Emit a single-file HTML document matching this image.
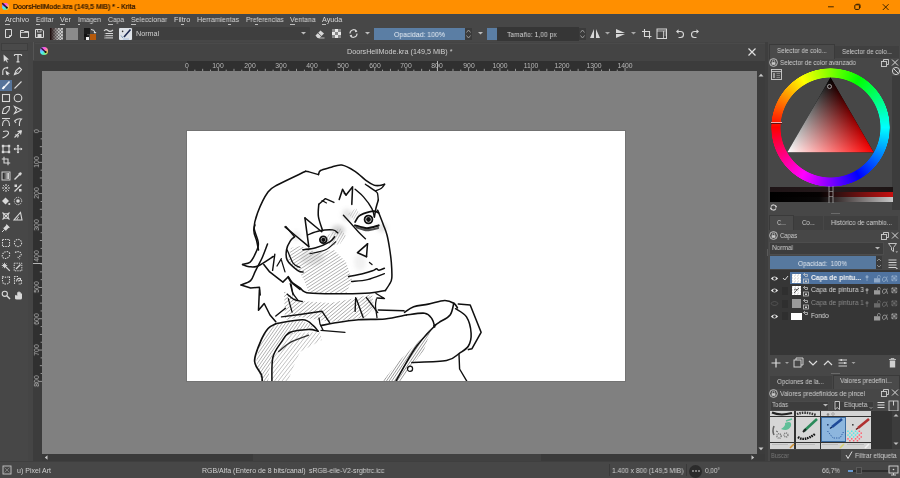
<!DOCTYPE html>
<html><head><meta charset="utf-8"><style>
html,body{margin:0;padding:0;width:900px;height:478px;overflow:hidden;background:#474747}
body>div,body>span,body>svg{position:absolute}
.t{font-family:'Liberation Sans',sans-serif;white-space:nowrap;line-height:1.2;will-change:transform}
</style></head><body>
<div style="left:0px;top:0px;width:900px;height:478px;background:#474747;"></div><div style="left:0px;top:0px;width:900px;height:14px;background:#ff8f00;"></div><div style="left:0px;top:14px;width:900px;height:1px;background:#3f4850;"></div><div style="left:1.9px;top:2.6px;width:7.4px;height:7.4px;border-radius:50%;background:conic-gradient(from 0deg,#ff50f0,#ff8aa0 60deg,#e8e048 120deg,#50f0b0 180deg,#50e8ff 240deg,#8c8cff 300deg,#ff50f0)"></div><svg style="left:1px;top:2px;" width="9" height="9" viewBox="0 0 9 9"><path d="M1.6 1.6 L5.8 5.6" stroke="#3a1040" stroke-width="1.5" stroke-linecap="round"/><circle cx="5.9" cy="5.7" r="0.9" fill="#101010"/></svg><span class="t" style="left:13.3px;top:2.77px;color:#1a0c00;font-size:7.0px;font-family:'Liberation Sans';transform:scaleX(0.9925);transform-origin:0 0;-webkit-text-stroke:0.2px #1a0c00;">DoorsHellMode.kra (149,5 MiB) * - Krita</span><svg style="left:825px;top:0px;" width="70" height="14" viewBox="0 0 70 14"><path d="M3 6.8H8.8" stroke="#2a1800" stroke-width="0.9"/><rect x="29.8" y="4.8" width="4.6" height="4.6" rx="0.8" fill="none" stroke="#2a1800" stroke-width="1"/><path d="M31.3 4.2H34.2Q35.2 4.2 35.2 5.2V8" fill="none" stroke="#2a1800" stroke-width="0.8"/><path d="M57.8 4.2L63.6 10M63.6 4.2L57.8 10" stroke="#2a1800" stroke-width="0.9"/></svg><span class="t" style="left:5px;top:15.89px;color:#d6d6d6;font-size:7.2px;font-family:'Liberation Sans';transform:scaleX(0.9804);transform-origin:0 0;">Archivo</span><span class="t" style="left:36px;top:15.89px;color:#d6d6d6;font-size:7.2px;font-family:'Liberation Sans';transform:scaleX(0.9318);transform-origin:0 0;">Editar</span><span class="t" style="left:60px;top:15.89px;color:#d6d6d6;font-size:7.2px;font-family:'Liberation Sans';transform:scaleX(0.9725);transform-origin:0 0;">Ver</span><span class="t" style="left:78px;top:15.89px;color:#d6d6d6;font-size:7.2px;font-family:'Liberation Sans';transform:scaleX(0.9590);transform-origin:0 0;">Imagen</span><span class="t" style="left:108.1px;top:15.89px;color:#d6d6d6;font-size:7.2px;font-family:'Liberation Sans';transform:scaleX(0.9309);transform-origin:0 0;">Capa</span><span class="t" style="left:131px;top:15.89px;color:#d6d6d6;font-size:7.2px;font-family:'Liberation Sans';transform:scaleX(0.9584);transform-origin:0 0;">Seleccionar</span><span class="t" style="left:173.8px;top:15.89px;color:#d6d6d6;font-size:7.2px;font-family:'Liberation Sans';transform:scaleX(1.0135);transform-origin:0 0;">Filtro</span><span class="t" style="left:196.7px;top:15.89px;color:#d6d6d6;font-size:7.2px;font-family:'Liberation Sans';transform:scaleX(0.9782);transform-origin:0 0;">Herramientas</span><span class="t" style="left:245.6px;top:15.89px;color:#d6d6d6;font-size:7.2px;font-family:'Liberation Sans';transform:scaleX(0.9341);transform-origin:0 0;">Preferencias</span><span class="t" style="left:290px;top:15.89px;color:#d6d6d6;font-size:7.2px;font-family:'Liberation Sans';transform:scaleX(0.9700);transform-origin:0 0;">Ventana</span><span class="t" style="left:321.7px;top:15.89px;color:#d6d6d6;font-size:7.2px;font-family:'Liberation Sans';transform:scaleX(0.9926);transform-origin:0 0;">Ayuda</span><svg style="left:3px;top:28px;" width="45" height="12" viewBox="0 0 45 12">
<path d="M2.5 1.5H8.5V7.5L6.5 9.5H2.5Z" fill="none" stroke="#d8d8d8" stroke-width="1"/><path d="M6.5 9.5V7.5H8.5" fill="none" stroke="#d8d8d8" stroke-width="0.9"/>
<path d="M17.5 2.5H20.5L21.5 3.5H25.5V9.5H17.5Z" fill="none" stroke="#d8d8d8" stroke-width="1"/><path d="M17.5 4.5H25.5" stroke="#d8d8d8" stroke-width="0.8"/>
<path d="M32.5 1.5H39L40.5 3V9.5H32.5Z" fill="none" stroke="#d8d8d8" stroke-width="1"/><rect x="34.5" y="6" width="4" height="3" fill="#d8d8d8"/><rect x="34.5" y="1.5" width="3.5" height="2.5" fill="none" stroke="#d8d8d8" stroke-width="0.7"/></svg><div style="left:50px;top:27.5px;width:13px;height:12.5px;background:linear-gradient(90deg,#1a0808,#3a2a2a 50%,#8a8a8a);"></div><div style="left:50px;top:27.5px;width:13px;height:12.5px;background:repeating-conic-gradient(#d8d8d8 0 25%,#707070 0 50%) 0 0/3.2px 3.2px;-webkit-mask:linear-gradient(90deg,transparent,#000 75%);mask:linear-gradient(90deg,transparent,#000 75%)"></div><div style="left:66px;top:28px;width:12px;height:12px;background:#8b8b8b;"></div><div style="left:84px;top:28px;width:6px;height:6px;background:#1b1b1b;"></div><div style="left:90px;top:34px;width:6px;height:6px;background:#b65a0c;"></div><div style="left:84px;top:35px;width:5px;height:5px;background:#1e1e1e;"></div><svg style="left:84px;top:34px;" width="6" height="6" viewBox="0 0 6 6"><path d="M2 6V3H5V6Z" fill="#f0f0f0"/><rect x="0" y="0" width="3" height="3" fill="#111"/></svg><svg style="left:90px;top:28px;" width="7" height="6" viewBox="0 0 7 6"><path d="M1 1.5 Q5 1.5 5 5" stroke="#e0e0e0" stroke-width="1" fill="none"/><path d="M3.5 4 L5 5.8 L6.5 4" fill="#e0e0e0"/></svg><svg style="left:103px;top:28px;" width="11" height="11" viewBox="0 0 11 11"><path d="M1 3 Q3 0.5 5 2.5 T10 2" stroke="#d8d8d8" stroke-width="1.1" fill="none"/><path d="M1 5.5H10M1 7.7H10M1 9.9H10" stroke="#d8d8d8" stroke-width="1"/><path d="M1 5.5H2.5M1 7.7H2.5M1 9.9H2.5" stroke="#555" stroke-width="1"/></svg><div style="left:119px;top:27.5px;width:12.5px;height:12.5px;background:#dfe3e8;border-radius:1px"></div><svg style="left:119px;top:27.5px;" width="13" height="13" viewBox="0 0 13 13"><path d="M4 10 L2 7.5" stroke="#7f9fc0" stroke-width="1"/><path d="M5 9 L11.5 1.5" stroke="#1e2a50" stroke-width="1.6"/><circle cx="3.6" cy="3.4" r="0.8" fill="#333"/><path d="M4 11 L10 11" stroke="#a8c0dc" stroke-width="1"/></svg><div style="left:133px;top:27px;width:177px;height:13px;background:#3f3f3f;border-radius:1px"></div><span class="t" style="left:136px;top:29.79px;color:#cfcfcf;font-size:7.2px;font-family:'Liberation Sans';">Normal</span><svg style="left:300px;top:31px;" width="7" height="5" viewBox="0 0 7 5"><path d="M1 1L3.5 3.5L6 1Z" fill="#bdbdbd"/></svg><svg style="left:314px;top:28px;" width="12" height="11" viewBox="0 0 12 11"><path d="M1.5 7.5L6.5 2.5L10 5.5L5.5 10H3.5Z" fill="#d8d8d8"/><path d="M4.5 10H10.5" stroke="#d8d8d8" stroke-width="0.8"/><path d="M4 5L7.5 8.3" stroke="#474747" stroke-width="0.8"/></svg><div style="left:332px;top:29px;width:9px;height:9px;background:repeating-conic-gradient(#e8e8e8 0 25%,#8a8a8a 0 50%) 0 0/6px 6px"></div><svg style="left:348px;top:28px;" width="11" height="11" viewBox="0 0 11 11"><path d="M2 5.5A3.6 3.6 0 0 1 8.5 3.2" stroke="#d8d8d8" stroke-width="1.1" fill="none"/><path d="M9 5.5A3.6 3.6 0 0 1 2.5 7.8" stroke="#d8d8d8" stroke-width="1.1" fill="none"/><path d="M7.2 1.5L9.5 3.8L7 4.2Z" fill="#d8d8d8"/><path d="M3.8 9.5L1.5 7.2L4 6.8Z" fill="#d8d8d8"/></svg><svg style="left:364px;top:31px;" width="7" height="5" viewBox="0 0 7 5"><path d="M1 1L3.5 3.5L6 1Z" fill="#bdbdbd"/></svg><div style="left:374px;top:27.5px;width:91px;height:12.5px;background:#5b7ea4;"></div><span class="t" style="left:393.5px;top:30.69px;color:#e8eef5;font-size:7.2px;font-family:'Liberation Sans';transform:scaleX(0.9594);transform-origin:0 0;">Opacidad: 100%</span><div style="left:465px;top:27.5px;width:7px;height:12.5px;background:#3b3b3b;"></div><svg style="left:465px;top:28px;" width="7" height="12" viewBox="0 0 7 12"><path d="M1.5 4.5L3.5 2L5.5 4.5M1.5 7.5L3.5 10L5.5 7.5" stroke="#a0a0a0" stroke-width="0.9" fill="none"/></svg><svg style="left:477px;top:31px;" width="7" height="5" viewBox="0 0 7 5"><path d="M1 1L3.5 3.5L6 1Z" fill="#bdbdbd"/></svg><div style="left:486.5px;top:27.5px;width:10px;height:12.5px;background:#5b7ea4;"></div><div style="left:496.5px;top:27px;width:82px;height:14px;background:#363636;"></div><span class="t" style="left:507px;top:30.69px;color:#d2d2d2;font-size:7.2px;font-family:'Liberation Sans';transform:scaleX(0.9353);transform-origin:0 0;">Tamaño: 1,00 px</span><div style="left:578.5px;top:27.5px;width:7px;height:12.5px;background:#3b3b3b;"></div><svg style="left:578.5px;top:28px;" width="7" height="12" viewBox="0 0 7 12"><path d="M1.5 4.5L3.5 2L5.5 4.5M1.5 7.5L3.5 10L5.5 7.5" stroke="#a0a0a0" stroke-width="0.9" fill="none"/></svg><svg style="left:589px;top:28px;" width="12" height="11" viewBox="0 0 12 11"><path d="M5 1L1 10H5Z M7 1L11 10H7Z" fill="#d8d8d8"/></svg><svg style="left:604px;top:31px;" width="7" height="5" viewBox="0 0 7 5"><path d="M1 1L3.5 3.5L6 1Z" fill="#a8a8a8"/></svg><svg style="left:615px;top:28px;" width="11" height="11" viewBox="0 0 11 11"><path d="M1 1L10 5H1Z M1 6L10 6L1 10Z" fill="#d8d8d8"/></svg><svg style="left:630px;top:31px;" width="7" height="5" viewBox="0 0 7 5"><path d="M1 1L3.5 3.5L6 1Z" fill="#a8a8a8"/></svg><svg style="left:641px;top:28px;" width="11" height="11" viewBox="0 0 11 11"><path d="M3.5 1V8.5H10.5M1 3.5H8.5V10.5" stroke="#d8d8d8" stroke-width="1.1" fill="none"/></svg><svg style="left:656px;top:28px;" width="11" height="11" viewBox="0 0 11 11"><rect x="1" y="1" width="9.5" height="9.5" fill="none" stroke="#d8d8d8" stroke-width="1"/><path d="M1 3H10.5M7.5 3V10.5" stroke="#d8d8d8" stroke-width="0.8"/><path d="M8.5 5H10M8.5 7H10" stroke="#d8d8d8" stroke-width="0.6"/></svg><svg style="left:675px;top:28px;" width="10" height="11" viewBox="0 0 10 11"><path d="M3 3.5H5.5A2.8 2.8 0 0 1 5.5 9.5H3.5" stroke="#d8d8d8" stroke-width="1.1" fill="none"/><path d="M1 3.5L3.5 1.2V5.8Z" fill="#d8d8d8"/></svg><svg style="left:690px;top:28px;" width="10" height="11" viewBox="0 0 10 11"><path d="M7 3.5H4.5A2.8 2.8 0 0 0 4.5 9.5H6.5" stroke="#d8d8d8" stroke-width="1.1" fill="none"/><path d="M9 3.5L6.5 1.2V5.8Z" fill="#d8d8d8"/></svg><div style="left:5px;top:23.8px;width:4.5px;height:0.6px;background:#bdbdbd;"></div><div style="left:36px;top:23.8px;width:4px;height:0.6px;background:#bdbdbd;"></div><div style="left:60px;top:23.8px;width:4.5px;height:0.6px;background:#bdbdbd;"></div><div style="left:78px;top:23.8px;width:2px;height:0.6px;background:#bdbdbd;"></div><div style="left:108.1px;top:23.8px;width:4.5px;height:0.6px;background:#bdbdbd;"></div><div style="left:131px;top:23.8px;width:4.5px;height:0.6px;background:#bdbdbd;"></div><div style="left:181.3px;top:23.8px;width:2.5px;height:0.6px;background:#bdbdbd;"></div><div style="left:227.8px;top:23.8px;width:3px;height:0.6px;background:#bdbdbd;"></div><div style="left:255.3px;top:23.8px;width:2.8px;height:0.6px;background:#bdbdbd;"></div><div style="left:290px;top:23.8px;width:4.5px;height:0.6px;background:#bdbdbd;"></div><div style="left:321.7px;top:23.8px;width:4.5px;height:0.6px;background:#bdbdbd;"></div><div style="left:28px;top:42px;width:5px;height:419px;background:#454545;"></div><div style="left:1px;top:43px;width:27px;height:8px;background:#4a4a4a;border:1px solid #3e3e3e;box-sizing:border-box"></div><div style="left:33px;top:42px;width:1px;height:18px;background:#555555;"></div><div style="left:34px;top:42px;width:732px;height:19px;background:#444444;"></div><div style="left:35px;top:43px;width:730px;height:1px;background:#4a4a4a;"></div><div style="left:39.9px;top:47.3px;width:8.2px;height:8.2px;border-radius:50%;background:conic-gradient(from 0deg,#ff50f0,#ff8aa0 60deg,#d8e048 120deg,#50f0b0 180deg,#50e8ff 240deg,#8c8cff 300deg,#ff50f0)"></div><svg style="left:39px;top:46px;" width="10" height="10" viewBox="0 0 10 10"><path d="M2.8 2.5 L6.5 6" stroke="#3a1040" stroke-width="1.5" stroke-linecap="round"/><circle cx="6.6" cy="6.1" r="1" fill="#101010"/></svg><span class="t" style="left:346.5px;top:48.20px;color:#cfcfcf;font-size:7.2px;font-family:'Liberation Sans';">DoorsHellMode.kra (149,5 MiB) *</span><svg style="left:747px;top:47px;" width="10" height="10" viewBox="0 0 10 10"><path d="M1.5 1.5L8.5 8.5M8.5 1.5L1.5 8.5" stroke="#e0e0e0" stroke-width="1.2"/></svg><div style="left:42px;top:71px;width:715px;height:383px;background:#808080;"></div><div style="left:186px;top:130px;width:440px;height:252px;background:#737373;"></div><div style="left:187px;top:131px;width:438px;height:250px;background:#ffffff;"></div><div style="left:757px;top:71px;width:8px;height:383px;background:#3c3c3c;"></div><svg style="left:757px;top:71.5px;" width="8" height="6" viewBox="0 0 8 6"><path d="M1.5 4.5L4 1.8L6.5 4.5Z" fill="#c8c8c8"/></svg><svg style="left:757px;top:446px;" width="8" height="6" viewBox="0 0 8 6"><path d="M1.5 1.5L4 4.2L6.5 1.5Z" fill="#c8c8c8"/></svg><div style="left:42px;top:454px;width:723px;height:7px;background:#3a3a3a;"></div><div style="left:253px;top:454px;width:288px;height:7px;background:#414141;"></div><svg style="left:43px;top:454px;" width="6" height="7" viewBox="0 0 6 7"><path d="M4.5 1.2L1.8 3.5L4.5 5.8Z" fill="#c8c8c8"/></svg><svg style="left:750px;top:454px;" width="6" height="7" viewBox="0 0 6 7"><path d="M1.5 1.2L4.2 3.5L1.5 5.8Z" fill="#c8c8c8"/></svg><div style="left:0px;top:79.7px;width:12px;height:11px;background:#56749a;"></div><svg style="left:0;top:0" width="0" height="0"><defs><linearGradient id="gg" x1="0" x2="1"><stop offset="0" stop-color="#222"/><stop offset="1" stop-color="#ddd"/></linearGradient></defs></svg><svg style="left:1.0px;top:53.0px;" width="10" height="10" viewBox="0 0 10 10"><path d="M2.5 1.5L8 6.5L5.5 6.8L7 9.2L6 9.6L4.6 7.2L2.8 8.8Z" fill="#d8d8d8"/></svg><svg style="left:13.3px;top:53.0px;" width="10" height="10" viewBox="0 0 10 10"><path d="M1.5 1.5H8.5M5 1.5V8.8M1.5 1.5V3M8.5 1.5V3M3.5 8.8H6.5" stroke="#d8d8d8" stroke-width="1.2" fill="none"/></svg><svg style="left:1.0px;top:65.5px;" width="10" height="10" viewBox="0 0 10 10"><path d="M1.8 9V5.5Q1.8 2 6 1.8" stroke="#d8d8d8" stroke-width="1.1" fill="none"/><circle cx="6.3" cy="1.8" r="1" fill="#d8d8d8"/><path d="M4.5 4.5L9 7.5L7 8L8 9.6L5.2 8.5Z" fill="#d8d8d8"/></svg><svg style="left:13.3px;top:65.5px;" width="10" height="10" viewBox="0 0 10 10"><path d="M1.5 8.5L3 4.5L6.5 1.5L8.5 3.5L5.5 7Z" stroke="#d8d8d8" stroke-width="1.1" fill="none"/><path d="M1.5 8.5L4.5 5.5" stroke="#d8d8d8" stroke-width="0.8"/></svg><svg style="left:1.0px;top:80.0px;" width="10" height="10" viewBox="0 0 10 10"><path d="M2 8.5L8.5 1.5" stroke="#e8eef5" stroke-width="1.6"/><path d="M1.5 9L3.5 6.5" stroke="#ffffff" stroke-width="2"/></svg><svg style="left:13.3px;top:80.0px;" width="10" height="10" viewBox="0 0 10 10"><path d="M1.5 8.5L8.5 1.5" stroke="#d8d8d8" stroke-width="1.1"/></svg><svg style="left:1.0px;top:92.7px;" width="10" height="10" viewBox="0 0 10 10"><rect x="1.5" y="1.5" width="7" height="7" stroke="#d8d8d8" stroke-width="1.1" fill="none"/></svg><svg style="left:13.3px;top:92.7px;" width="10" height="10" viewBox="0 0 10 10"><circle cx="5" cy="5" r="3.8" stroke="#d8d8d8" stroke-width="1.1" fill="none"/></svg><svg style="left:1.0px;top:105.0px;" width="10" height="10" viewBox="0 0 10 10"><path d="M1.5 7.5L2.5 3.5L6 1.5H8.5L8 5L5 8.5H1.5Z" stroke="#d8d8d8" stroke-width="1.1" fill="none"/></svg><svg style="left:13.3px;top:105.0px;" width="10" height="10" viewBox="0 0 10 10"><path d="M1.5 1.5L8.5 5L1.5 8.5L3.5 5Z" stroke="#d8d8d8" stroke-width="1.1" fill="none"/></svg><svg style="left:1.0px;top:117.0px;" width="10" height="10" viewBox="0 0 10 10"><path d="M1.5 9Q1.5 3 5 3Q8.5 3 8.5 9M1 1.5H9" stroke="#d8d8d8" stroke-width="1.1" fill="none"/></svg><svg style="left:13.3px;top:117.0px;" width="10" height="10" viewBox="0 0 10 10"><path d="M1.5 4Q5 1 8.5 2Q6 4 6.5 9" stroke="#d8d8d8" stroke-width="1.1" fill="none"/><path d="M1.5 4L3 6" stroke="#d8d8d8" stroke-width="1.1" fill="none"/></svg><svg style="left:1.0px;top:129.0px;" width="10" height="10" viewBox="0 0 10 10"><path d="M2 2.5Q8 1 7.5 4.5Q6.5 7 1.5 9" stroke="#d8d8d8" stroke-width="1.1" fill="none"/></svg><svg style="left:13.3px;top:129.0px;" width="10" height="10" viewBox="0 0 10 10"><path d="M1.5 8.5L8.5 1.5M8.5 1.5L4.5 2.5M8.5 1.5L7.5 5.5M2.5 5.5L4 7M4.5 8.5L5.5 6" stroke="#d8d8d8" stroke-width="1.1" fill="none"/></svg><svg style="left:1.0px;top:144.0px;" width="10" height="10" viewBox="0 0 10 10"><rect x="2" y="2" width="6" height="6" stroke="#d8d8d8" stroke-width="1.1" fill="none"/><rect x="0.8" y="0.8" width="2.4" height="2.4" fill="#d8d8d8"/><rect x="6.8" y="0.8" width="2.4" height="2.4" fill="#d8d8d8"/><rect x="0.8" y="6.8" width="2.4" height="2.4" fill="#d8d8d8"/><rect x="6.8" y="6.8" width="2.4" height="2.4" fill="#d8d8d8"/></svg><svg style="left:13.3px;top:144.0px;" width="10" height="10" viewBox="0 0 10 10"><path d="M5 1V9M1 5H9" stroke="#d8d8d8" stroke-width="1.2"/><path d="M5 0.5L3.5 2.3H6.5ZM5 9.5L3.5 7.7H6.5ZM0.5 5L2.3 3.5V6.5ZM9.5 5L7.7 3.5V6.5Z" fill="#d8d8d8"/></svg><svg style="left:1.0px;top:156.0px;" width="10" height="10" viewBox="0 0 10 10"><path d="M3 0.8V7H9.2M0.8 3H7V9.2" stroke="#d8d8d8" stroke-width="1.1" fill="none"/></svg><svg style="left:1.0px;top:171.0px;" width="10" height="10" viewBox="0 0 10 10"><rect x="1" y="1" width="8" height="8" fill="none" stroke="#d8d8d8" stroke-width="0.9"/><rect x="2" y="2" width="6" height="6" fill="url(#gg)"/></svg><svg style="left:13.3px;top:171.0px;" width="10" height="10" viewBox="0 0 10 10"><path d="M1.5 8.5L6 4" stroke="#d8d8d8" stroke-width="1.4"/><path d="M5 3L7 1.2Q9 1 8.8 3L7 5Z" fill="#d8d8d8"/></svg><svg style="left:1.0px;top:183.0px;" width="10" height="10" viewBox="0 0 10 10"><path d="M5 1V3M5 7V9M1 5H3M7 5H9M2.2 2.2L3.5 3.5M6.5 6.5L7.8 7.8M2.2 7.8L3.5 6.5M6.5 3.5L7.8 2.2" stroke="#d8d8d8" stroke-width="1"/><circle cx="5" cy="5" r="1" fill="#d8d8d8"/></svg><svg style="left:13.3px;top:183.0px;" width="10" height="10" viewBox="0 0 10 10"><path d="M1.5 8.5L8.5 1.5" stroke="#d8d8d8" stroke-width="1.2"/><rect x="1.5" y="1.5" width="2.5" height="2.5" fill="#d8d8d8"/><rect x="6" y="6" width="2.5" height="2.5" fill="#d8d8d8"/></svg><svg style="left:1.0px;top:195.6px;" width="10" height="10" viewBox="0 0 10 10"><path d="M1 5L4.5 1.5L8 5L4.5 8.5Z" fill="#d8d8d8"/><circle cx="8.3" cy="8" r="1.1" fill="#d8d8d8"/></svg><svg style="left:13.3px;top:195.6px;" width="10" height="10" viewBox="0 0 10 10"><circle cx="5" cy="5" r="3.7" fill="none" stroke="#d8d8d8" stroke-width="1" stroke-dasharray="1.2 0.9"/><circle cx="5" cy="5" r="1.8" fill="#d8d8d8"/></svg><svg style="left:1.0px;top:211.0px;" width="10" height="10" viewBox="0 0 10 10"><path d="M1.5 1.5L8.5 8.5M8.5 1.5L1.5 8.5" stroke="#d8d8d8" stroke-width="1.1"/><rect x="2.5" y="2.5" width="5" height="5" fill="none" stroke="#d8d8d8" stroke-width="0.7"/></svg><svg style="left:13.3px;top:211.0px;" width="10" height="10" viewBox="0 0 10 10"><path d="M1 9H9L7.5 1.5Z" stroke="#d8d8d8" stroke-width="1.1" fill="none"/><path d="M4 9Q4 6.5 6 6" stroke="#d8d8d8" stroke-width="0.8" fill="none"/></svg><svg style="left:1.0px;top:223.0px;" width="10" height="10" viewBox="0 0 10 10"><path d="M5.5 1L9 4.5L7.5 5L5 7.5L5.5 8.5L1.5 4.5L2.5 5L5 2.5Z" fill="#d8d8d8"/><path d="M3.5 6.5L1 9" stroke="#d8d8d8" stroke-width="1"/></svg><svg style="left:1.0px;top:238.0px;" width="10" height="10" viewBox="0 0 10 10"><rect x="1.5" y="1.5" width="7" height="7" fill="none" stroke="#d8d8d8" stroke-width="1.1" stroke-dasharray="1.4 1"/></svg><svg style="left:13.3px;top:238.0px;" width="10" height="10" viewBox="0 0 10 10"><circle cx="5" cy="5" r="3.6" fill="none" stroke="#d8d8d8" stroke-width="1.1" stroke-dasharray="1.4 1"/></svg><svg style="left:1.0px;top:250.0px;" width="10" height="10" viewBox="0 0 10 10"><ellipse cx="5" cy="5" rx="4" ry="3.2" transform="rotate(-35 5 5)" fill="none" stroke="#d8d8d8" stroke-width="1.1" stroke-dasharray="1.4 1"/></svg><svg style="left:13.3px;top:250.0px;" width="10" height="10" viewBox="0 0 10 10"><path d="M2 2.5Q6 0.5 8 3Q9 6 5.5 6.5Q4 7 7 9" fill="none" stroke="#d8d8d8" stroke-width="1.1" stroke-dasharray="1.4 1"/></svg><svg style="left:1.0px;top:262.4px;" width="10" height="10" viewBox="0 0 10 10"><path d="M4 4L8.8 8.8" stroke="#d8d8d8" stroke-width="1.2"/><path d="M3.5 0.8V6.2M0.8 3.5H6.2M1.6 1.6L5.4 5.4M5.4 1.6L1.6 5.4" stroke="#d8d8d8" stroke-width="0.9"/></svg><svg style="left:13.3px;top:262.4px;" width="10" height="10" viewBox="0 0 10 10"><rect x="1.2" y="1.2" width="7.6" height="7.6" fill="none" stroke="#d8d8d8" stroke-width="1" stroke-dasharray="1.3 1"/><path d="M3 7L7.5 2.5" stroke="#d8d8d8" stroke-width="1.3"/></svg><svg style="left:1.0px;top:275.0px;" width="10" height="10" viewBox="0 0 10 10"><path d="M1.5 1.5Q5 3 8.5 1.5V6Q8.5 9 5 9Q1.5 9 1.5 6Z" fill="none" stroke="#d8d8d8" stroke-width="1.1" stroke-dasharray="1.4 1"/></svg><svg style="left:13.3px;top:275.0px;" width="10" height="10" viewBox="0 0 10 10"><path d="M1.5 9V1.5H5M8.5 5V9H5" fill="none" stroke="#d8d8d8" stroke-width="1.1" stroke-dasharray="1.4 1"/><path d="M3.5 6.5Q4 2.5 7.5 3.5Q8 6 5 6" stroke="#d8d8d8" stroke-width="1.1" fill="none"/></svg><svg style="left:1.0px;top:289.5px;" width="10" height="10" viewBox="0 0 10 10"><circle cx="3.8" cy="3.8" r="2.6" stroke="#d8d8d8" stroke-width="1.1" fill="none"/><path d="M5.8 5.8L9 9" stroke="#d8d8d8" stroke-width="1.4"/></svg><svg style="left:13.3px;top:289.5px;" width="10" height="10" viewBox="0 0 10 10"><path d="M2 5.5V8.5Q2 9.5 4 9.5H7.5Q9 9.5 9 8V3.5H7.8V5.5V2.2H6.6V5V1.5H5.4V5V2.2H4.2V6L3 4.8Z" fill="#d8d8d8"/></svg><div style="left:33px;top:61px;width:732px;height:10px;background:#3c3c3c;"></div><div style="left:33px;top:71px;width:9px;height:390px;background:#3c3c3c;"></div><div style="left:187px;top:61px;width:437px;height:10px;background:#303030;"></div><div style="left:33px;top:131px;width:9px;height:250px;background:#303030;"></div><svg style="left:187px;top:61px;" width="440" height="10" viewBox="0 0 440 10"><rect x="-0.40" y="7.00" width="0.9" height="3" fill="#a0a0a0"/><rect x="7.42" y="8.60" width="0.9" height="1.4" fill="#a0a0a0"/><rect x="15.24" y="7.80" width="0.9" height="2.2" fill="#a0a0a0"/><rect x="23.06" y="8.60" width="0.9" height="1.4" fill="#a0a0a0"/><rect x="30.89" y="7.00" width="0.9" height="3" fill="#a0a0a0"/><rect x="38.71" y="8.60" width="0.9" height="1.4" fill="#a0a0a0"/><rect x="46.53" y="7.80" width="0.9" height="2.2" fill="#a0a0a0"/><rect x="54.35" y="8.60" width="0.9" height="1.4" fill="#a0a0a0"/><rect x="62.17" y="7.00" width="0.9" height="3" fill="#a0a0a0"/><rect x="69.99" y="8.60" width="0.9" height="1.4" fill="#a0a0a0"/><rect x="77.81" y="7.80" width="0.9" height="2.2" fill="#a0a0a0"/><rect x="85.64" y="8.60" width="0.9" height="1.4" fill="#a0a0a0"/><rect x="93.46" y="7.00" width="0.9" height="3" fill="#a0a0a0"/><rect x="101.28" y="8.60" width="0.9" height="1.4" fill="#a0a0a0"/><rect x="109.10" y="7.80" width="0.9" height="2.2" fill="#a0a0a0"/><rect x="116.92" y="8.60" width="0.9" height="1.4" fill="#a0a0a0"/><rect x="124.74" y="7.00" width="0.9" height="3" fill="#a0a0a0"/><rect x="132.56" y="8.60" width="0.9" height="1.4" fill="#a0a0a0"/><rect x="140.39" y="7.80" width="0.9" height="2.2" fill="#a0a0a0"/><rect x="148.21" y="8.60" width="0.9" height="1.4" fill="#a0a0a0"/><rect x="156.03" y="7.00" width="0.9" height="3" fill="#a0a0a0"/><rect x="163.85" y="8.60" width="0.9" height="1.4" fill="#a0a0a0"/><rect x="171.67" y="7.80" width="0.9" height="2.2" fill="#a0a0a0"/><rect x="179.49" y="8.60" width="0.9" height="1.4" fill="#a0a0a0"/><rect x="187.31" y="7.00" width="0.9" height="3" fill="#a0a0a0"/><rect x="195.14" y="8.60" width="0.9" height="1.4" fill="#a0a0a0"/><rect x="202.96" y="7.80" width="0.9" height="2.2" fill="#a0a0a0"/><rect x="210.78" y="8.60" width="0.9" height="1.4" fill="#a0a0a0"/><rect x="218.60" y="7.00" width="0.9" height="3" fill="#a0a0a0"/><rect x="226.42" y="8.60" width="0.9" height="1.4" fill="#a0a0a0"/><rect x="234.24" y="7.80" width="0.9" height="2.2" fill="#a0a0a0"/><rect x="242.06" y="8.60" width="0.9" height="1.4" fill="#a0a0a0"/><rect x="249.89" y="7.00" width="0.9" height="3" fill="#a0a0a0"/><rect x="257.71" y="8.60" width="0.9" height="1.4" fill="#a0a0a0"/><rect x="265.53" y="7.80" width="0.9" height="2.2" fill="#a0a0a0"/><rect x="273.35" y="8.60" width="0.9" height="1.4" fill="#a0a0a0"/><rect x="281.17" y="7.00" width="0.9" height="3" fill="#a0a0a0"/><rect x="288.99" y="8.60" width="0.9" height="1.4" fill="#a0a0a0"/><rect x="296.81" y="7.80" width="0.9" height="2.2" fill="#a0a0a0"/><rect x="304.64" y="8.60" width="0.9" height="1.4" fill="#a0a0a0"/><rect x="312.46" y="7.00" width="0.9" height="3" fill="#a0a0a0"/><rect x="320.28" y="8.60" width="0.9" height="1.4" fill="#a0a0a0"/><rect x="328.10" y="7.80" width="0.9" height="2.2" fill="#a0a0a0"/><rect x="335.92" y="8.60" width="0.9" height="1.4" fill="#a0a0a0"/><rect x="343.74" y="7.00" width="0.9" height="3" fill="#a0a0a0"/><rect x="351.56" y="8.60" width="0.9" height="1.4" fill="#a0a0a0"/><rect x="359.39" y="7.80" width="0.9" height="2.2" fill="#a0a0a0"/><rect x="367.21" y="8.60" width="0.9" height="1.4" fill="#a0a0a0"/><rect x="375.03" y="7.00" width="0.9" height="3" fill="#a0a0a0"/><rect x="382.85" y="8.60" width="0.9" height="1.4" fill="#a0a0a0"/><rect x="390.67" y="7.80" width="0.9" height="2.2" fill="#a0a0a0"/><rect x="398.49" y="8.60" width="0.9" height="1.4" fill="#a0a0a0"/><rect x="406.31" y="7.00" width="0.9" height="3" fill="#a0a0a0"/><rect x="414.14" y="8.60" width="0.9" height="1.4" fill="#a0a0a0"/><rect x="421.96" y="7.80" width="0.9" height="2.2" fill="#a0a0a0"/><rect x="429.78" y="8.60" width="0.9" height="1.4" fill="#a0a0a0"/><rect x="437.60" y="7.00" width="0.9" height="3" fill="#a0a0a0"/></svg><span class="t" style="left:167.00px;top:61.6px;width:40px;text-align:center;color:#b8b8b8;font-size:6.8px">0</span><span class="t" style="left:198.29px;top:61.6px;width:40px;text-align:center;color:#b8b8b8;font-size:6.8px">100</span><span class="t" style="left:229.57px;top:61.6px;width:40px;text-align:center;color:#b8b8b8;font-size:6.8px">200</span><span class="t" style="left:260.86px;top:61.6px;width:40px;text-align:center;color:#b8b8b8;font-size:6.8px">300</span><span class="t" style="left:292.14px;top:61.6px;width:40px;text-align:center;color:#b8b8b8;font-size:6.8px">400</span><span class="t" style="left:323.43px;top:61.6px;width:40px;text-align:center;color:#b8b8b8;font-size:6.8px">500</span><span class="t" style="left:354.71px;top:61.6px;width:40px;text-align:center;color:#b8b8b8;font-size:6.8px">600</span><span class="t" style="left:386.00px;top:61.6px;width:40px;text-align:center;color:#b8b8b8;font-size:6.8px">700</span><span class="t" style="left:417.29px;top:61.6px;width:40px;text-align:center;color:#b8b8b8;font-size:6.8px">800</span><span class="t" style="left:448.57px;top:61.6px;width:40px;text-align:center;color:#b8b8b8;font-size:6.8px">900</span><span class="t" style="left:479.86px;top:61.6px;width:40px;text-align:center;color:#b8b8b8;font-size:6.8px">1000</span><span class="t" style="left:511.14px;top:61.6px;width:40px;text-align:center;color:#b8b8b8;font-size:6.8px">1100</span><span class="t" style="left:542.43px;top:61.6px;width:40px;text-align:center;color:#b8b8b8;font-size:6.8px">1200</span><span class="t" style="left:573.71px;top:61.6px;width:40px;text-align:center;color:#b8b8b8;font-size:6.8px">1300</span><span class="t" style="left:605.00px;top:61.6px;width:40px;text-align:center;color:#b8b8b8;font-size:6.8px">1400</span><svg style="left:33px;top:131px;" width="9" height="254" viewBox="0 0 9 254"><rect x="6.00" y="-0.40" width="3" height="0.9" fill="#a0a0a0"/><rect x="7.60" y="7.42" width="1.4" height="0.9" fill="#a0a0a0"/><rect x="6.80" y="15.24" width="2.2" height="0.9" fill="#a0a0a0"/><rect x="7.60" y="23.06" width="1.4" height="0.9" fill="#a0a0a0"/><rect x="6.00" y="30.89" width="3" height="0.9" fill="#a0a0a0"/><rect x="7.60" y="38.71" width="1.4" height="0.9" fill="#a0a0a0"/><rect x="6.80" y="46.53" width="2.2" height="0.9" fill="#a0a0a0"/><rect x="7.60" y="54.35" width="1.4" height="0.9" fill="#a0a0a0"/><rect x="6.00" y="62.17" width="3" height="0.9" fill="#a0a0a0"/><rect x="7.60" y="69.99" width="1.4" height="0.9" fill="#a0a0a0"/><rect x="6.80" y="77.81" width="2.2" height="0.9" fill="#a0a0a0"/><rect x="7.60" y="85.64" width="1.4" height="0.9" fill="#a0a0a0"/><rect x="6.00" y="93.46" width="3" height="0.9" fill="#a0a0a0"/><rect x="7.60" y="101.28" width="1.4" height="0.9" fill="#a0a0a0"/><rect x="6.80" y="109.10" width="2.2" height="0.9" fill="#a0a0a0"/><rect x="7.60" y="116.92" width="1.4" height="0.9" fill="#a0a0a0"/><rect x="6.00" y="124.74" width="3" height="0.9" fill="#a0a0a0"/><rect x="7.60" y="132.56" width="1.4" height="0.9" fill="#a0a0a0"/><rect x="6.80" y="140.39" width="2.2" height="0.9" fill="#a0a0a0"/><rect x="7.60" y="148.21" width="1.4" height="0.9" fill="#a0a0a0"/><rect x="6.00" y="156.03" width="3" height="0.9" fill="#a0a0a0"/><rect x="7.60" y="163.85" width="1.4" height="0.9" fill="#a0a0a0"/><rect x="6.80" y="171.67" width="2.2" height="0.9" fill="#a0a0a0"/><rect x="7.60" y="179.49" width="1.4" height="0.9" fill="#a0a0a0"/><rect x="6.00" y="187.31" width="3" height="0.9" fill="#a0a0a0"/><rect x="7.60" y="195.14" width="1.4" height="0.9" fill="#a0a0a0"/><rect x="6.80" y="202.96" width="2.2" height="0.9" fill="#a0a0a0"/><rect x="7.60" y="210.78" width="1.4" height="0.9" fill="#a0a0a0"/><rect x="6.00" y="218.60" width="3" height="0.9" fill="#a0a0a0"/><rect x="7.60" y="226.42" width="1.4" height="0.9" fill="#a0a0a0"/><rect x="6.80" y="234.24" width="2.2" height="0.9" fill="#a0a0a0"/><rect x="7.60" y="242.06" width="1.4" height="0.9" fill="#a0a0a0"/><rect x="6.00" y="249.89" width="3" height="0.9" fill="#a0a0a0"/></svg><span class="t" style="left:16.5px;top:126.90px;width:40px;text-align:center;color:#b8b8b8;font-size:6.8px;transform-origin:20px 4.1px;transform:translate(0,0) rotate(-90deg);margin-left:0">0</span><span class="t" style="left:16.5px;top:158.19px;width:40px;text-align:center;color:#b8b8b8;font-size:6.8px;transform-origin:20px 4.1px;transform:translate(0,0) rotate(-90deg);margin-left:0">100</span><span class="t" style="left:16.5px;top:189.47px;width:40px;text-align:center;color:#b8b8b8;font-size:6.8px;transform-origin:20px 4.1px;transform:translate(0,0) rotate(-90deg);margin-left:0">200</span><span class="t" style="left:16.5px;top:220.76px;width:40px;text-align:center;color:#b8b8b8;font-size:6.8px;transform-origin:20px 4.1px;transform:translate(0,0) rotate(-90deg);margin-left:0">300</span><span class="t" style="left:16.5px;top:252.04px;width:40px;text-align:center;color:#b8b8b8;font-size:6.8px;transform-origin:20px 4.1px;transform:translate(0,0) rotate(-90deg);margin-left:0">400</span><span class="t" style="left:16.5px;top:283.33px;width:40px;text-align:center;color:#b8b8b8;font-size:6.8px;transform-origin:20px 4.1px;transform:translate(0,0) rotate(-90deg);margin-left:0">500</span><span class="t" style="left:16.5px;top:314.61px;width:40px;text-align:center;color:#b8b8b8;font-size:6.8px;transform-origin:20px 4.1px;transform:translate(0,0) rotate(-90deg);margin-left:0">600</span><span class="t" style="left:16.5px;top:345.90px;width:40px;text-align:center;color:#b8b8b8;font-size:6.8px;transform-origin:20px 4.1px;transform:translate(0,0) rotate(-90deg);margin-left:0">700</span><span class="t" style="left:16.5px;top:377.19px;width:40px;text-align:center;color:#b8b8b8;font-size:6.8px;transform-origin:20px 4.1px;transform:translate(0,0) rotate(-90deg);margin-left:0">800</span><div style="left:436.9px;top:61px;width:0.9px;height:10px;background:#b4b4b4;"></div><div style="left:33px;top:263.4px;width:9px;height:0.9px;background:#b4b4b4;"></div><div style="left:765px;top:42px;width:135px;height:419px;background:#474747;"></div><div style="left:765px;top:42px;width:3px;height:419px;background:#3e3e3e;"></div><div style="left:768.5px;top:43.5px;width:66px;height:15px;background:#4a4a4a;border:1px solid #3a3a3a;border-bottom:none;box-sizing:border-box"></div><div style="left:834.5px;top:46px;width:64px;height:12px;background:#404040;"></div><span class="t" style="left:776.7px;top:47.17px;color:#cdcdcd;font-size:7.0px;font-family:'Liberation Sans';transform:scaleX(0.8870);transform-origin:0 0;">Selector de colo...</span><span class="t" style="left:842px;top:47.57px;color:#cdcdcd;font-size:7.0px;font-family:'Liberation Sans';transform:scaleX(0.8924);transform-origin:0 0;">Selector de colo...</span><svg style="left:769.0px;top:58.3px;" width="9" height="9" viewBox="0 0 9 9"><circle cx="4.5" cy="4.5" r="3.9" fill="none" stroke="#c8c8c8" stroke-width="0.9"/><rect x="2.6" y="4.2" width="3.8" height="2.6" fill="#c8c8c8"/><path d="M3.3 4.3V3.2A1.2 1.2 0 0 1 5.7 3.2V4.3" stroke="#c8c8c8" stroke-width="0.7" fill="none"/></svg><span class="t" style="left:780.2px;top:58.97px;color:#cdcdcd;font-size:7.0px;font-family:'Liberation Sans';transform:scaleX(0.8958);transform-origin:0 0;">Selector de color avanzado</span><svg style="left:880px;top:57.8px;" width="20" height="10" viewBox="0 0 20 10"><rect x="1.5" y="3.5" width="5" height="5" fill="none" stroke="#d0d0d0" stroke-width="0.9"/><path d="M3.5 3.5V1.5H8.5V6.5H6.5" fill="none" stroke="#d0d0d0" stroke-width="0.9"/><path d="M12 1.5L18 7.5M18 1.5L12 7.5" stroke="#d8d8d8" stroke-width="1"/></svg><svg style="left:891px;top:66px;" width="10" height="10" viewBox="0 0 10 10"><circle cx="5" cy="5" r="3.6" fill="none" stroke="#d0d0d0" stroke-width="1"/><path d="M2.5 2.5L7.5 7.5" stroke="#d0d0d0" stroke-width="1"/></svg><div style="left:892px;top:76px;width:8px;height:134px;background:#3c3c3c;"></div><svg style="left:770px;top:68px;" width="13" height="13" viewBox="0 0 13 13"><rect x="1.5" y="1.5" width="10" height="10" fill="none" stroke="#d0d0d0" stroke-width="0.9"/><path d="M1.5 3.6H11.5" stroke="#d0d0d0" stroke-width="0.9"/><path d="M4 5V10" stroke="#d0d0d0" stroke-width="1.2"/><path d="M6.5 5.5H10M6.5 7.5H10M6.5 9.5H10" stroke="#9a9a9a" stroke-width="0.7"/></svg><div style="left:771.2px;top:68.0px;width:118.6px;height:118.6px;border-radius:50%;background:conic-gradient(from 270deg,#ff0000,#ffff00 60deg,#00ff00 120deg,#00ffff 180deg,#0000ff 240deg,#ff00ff 300deg,#ff0000 360deg);-webkit-mask:radial-gradient(circle closest-side,transparent 83.38%,#000 84.58%,#000 99%,transparent 100%);mask:radial-gradient(circle closest-side,transparent 83.38%,#000 84.58%,#000 99%,transparent 100%)"></div><div style="left:770.7px;top:121.7px;width:11px;height:0.9px;background:#f0b0b0;"></div><div style="left:770.7px;top:122.6px;width:11px;height:0.9px;background:#601010;"></div><svg style="left:770px;top:68px;" width="121" height="121" viewBox="0 0 121 121"><defs><linearGradient id="tri1" gradientUnits="userSpaceOnUse" x1="0" y1="9.50" x2="0" y2="84.20"><stop offset="0" stop-color="#000"/><stop offset="1" stop-color="#ff0000"/></linearGradient><linearGradient id="tri2" gradientUnits="userSpaceOnUse" x1="82.06" y1="46.85" x2="17.37" y2="84.20"><stop offset="0" stop-color="#000"/><stop offset="1" stop-color="#00ffff"/></linearGradient></defs><g style="isolation:isolate"><path d="M60.50 9.50L17.37 84.20L103.63 84.20Z" fill="url(#tri1)"/><path d="M60.50 9.50L17.37 84.20L103.63 84.20Z" fill="url(#tri2)" style="mix-blend-mode:screen"/></g><circle cx="59.5" cy="18.5" r="2" fill="none" stroke="#c0c0c0" stroke-width="0.8"/></svg><div style="left:769.5px;top:187px;width:123px;height:5px;background:linear-gradient(90deg,#1e1416,#24181a 50%,#1c1414)"></div><div style="left:769.5px;top:192px;width:123px;height:5px;background:linear-gradient(90deg,#000 0%,#050202 40%,#301010 55%,#c81010 100%)"></div><div style="left:769.5px;top:197px;width:123px;height:5px;background:linear-gradient(90deg,#000 0%,#080606 40%,#3a3030 55%,#c8c8c8 100%)"></div><svg style="left:828px;top:186px;" width="6" height="17" viewBox="0 0 6 17"><path d="M1 0V17M5 0V17" stroke="#a8a8a8" stroke-width="0.8"/><path d="M1 5.5H5M1 10.5H5" stroke="#a8a8a8" stroke-width="0.6"/></svg><svg style="left:769px;top:202.5px;" width="9" height="9" viewBox="0 0 9 9"><path d="M2 3.5A3 3 0 0 1 7.5 4M7 5.5A3 3 0 0 1 1.5 5" stroke="#d0d0d0" stroke-width="1.1" fill="none"/><path d="M6 2.5L8 3.8L6.8 5.2Z M3 6.5L1 5.2L2.2 3.8Z" fill="#d0d0d0"/></svg><div style="left:831px;top:212.5px;width:9px;height:1px;background:#6a6a6a;"></div><div style="left:768.5px;top:215px;width:25px;height:15px;background:#4a4a4a;border:1px solid #3a3a3a;border-bottom:none;box-sizing:border-box"></div><div style="left:794px;top:216px;width:29px;height:14px;background:#404040;"></div><div style="left:823.5px;top:216px;width:74px;height:14px;background:#404040;"></div><span class="t" style="left:777px;top:219.17px;color:#cdcdcd;font-size:7.0px;font-family:'Liberation Sans';transform:scaleX(0.8264);transform-origin:0 0;">C...</span><span class="t" style="left:802px;top:219.17px;color:#cdcdcd;font-size:7.0px;font-family:'Liberation Sans';transform:scaleX(0.8786);transform-origin:0 0;">Co...</span><span class="t" style="left:831.1px;top:219.17px;color:#cdcdcd;font-size:7.0px;font-family:'Liberation Sans';transform:scaleX(0.9062);transform-origin:0 0;">Histórico de cambio...</span><svg style="left:769.0px;top:231.0px;" width="9" height="9" viewBox="0 0 9 9"><circle cx="4.5" cy="4.5" r="3.9" fill="none" stroke="#c8c8c8" stroke-width="0.9"/><rect x="2.6" y="4.2" width="3.8" height="2.6" fill="#c8c8c8"/><path d="M3.3 4.3V3.2A1.2 1.2 0 0 1 5.7 3.2V4.3" stroke="#c8c8c8" stroke-width="0.7" fill="none"/></svg><span class="t" style="left:780px;top:231.57px;color:#cdcdcd;font-size:7.0px;font-family:'Liberation Sans';transform:scaleX(0.8500);transform-origin:0 0;">Capas</span><svg style="left:880px;top:230.5px;" width="20" height="10" viewBox="0 0 20 10"><rect x="1.5" y="3.5" width="5" height="5" fill="none" stroke="#d0d0d0" stroke-width="0.9"/><path d="M3.5 3.5V1.5H8.5V6.5H6.5" fill="none" stroke="#d0d0d0" stroke-width="0.9"/><path d="M12 1.5L18 7.5M18 1.5L12 7.5" stroke="#d8d8d8" stroke-width="1"/></svg><div style="left:769px;top:241.5px;width:114.5px;height:13.5px;background:#3d3d3d;border:1px solid #4d4d4d;box-sizing:border-box"></div><span class="t" style="left:771.8px;top:244.07px;color:#cdcdcd;font-size:7.0px;font-family:'Liberation Sans';transform:scaleX(0.9307);transform-origin:0 0;">Normal</span><svg style="left:874px;top:246px;" width="7" height="5" viewBox="0 0 7 5"><path d="M1 1L3.5 3.5L6 1Z" fill="#b8b8b8"/></svg><svg style="left:887px;top:242px;" width="12" height="12" viewBox="0 0 12 12"><path d="M1.5 1.5H9.5L6.5 5.5V9.5L4.5 8V5.5Z" fill="none" stroke="#d0d0d0" stroke-width="0.9"/><path d="M8.5 9.5L9.8 10.8L11.1 9.5" fill="#d0d0d0"/></svg><div style="left:767px;top:249px;width:1px;height:7px;background:#5a5a5a;"></div><div style="left:769.7px;top:256.4px;width:106.3px;height:13.1px;background:#57799f;"></div><span class="t" style="left:798px;top:259.67px;color:#e2e8ef;font-size:7.0px;font-family:'Liberation Sans';transform:scaleX(0.9124);transform-origin:0 0;">Opacidad:&nbsp; 100%</span><div style="left:876px;top:256.4px;width:6px;height:13.1px;background:#3b3b3b;"></div><svg style="left:876px;top:257px;" width="6" height="12" viewBox="0 0 6 12"><path d="M1 4L3 2L5 4M1 8L3 10L5 8" stroke="#a0a0a0" stroke-width="0.8" fill="none"/></svg><svg style="left:887px;top:258px;" width="12" height="12" viewBox="0 0 12 12"><path d="M1.5 2H9.5M1.5 4.5H9.5M1.5 7H9.5M1.5 9.5H9.5" stroke="#d0d0d0" stroke-width="1.1"/><path d="M8.5 10L9.8 11.3L11.1 10" fill="#d0d0d0"/></svg><div style="left:769.5px;top:269.5px;width:130.5px;height:85.5px;background:#363636;"></div><div style="left:789.8px;top:271.5px;width:110.2px;height:12.4px;background:#4f73a0;"></div><svg style="left:770.0px;top:274.7px;" width="9" height="7" viewBox="0 0 9 7"><path d="M0.8 3.5Q4.5 -0.5 8.2 3.5Q4.5 7.5 0.8 3.5Z" fill="#e0e0e0"/><circle cx="4.5" cy="3.6" r="1.4" fill="#363636"/></svg><svg style="left:782px;top:275.2px;" width="7" height="6" viewBox="0 0 7 6"><path d="M1 3L2.8 5L6 1" stroke="#e8e8e8" stroke-width="0.9" fill="none"/></svg><div style="left:792px;top:273.7px;width:9px;height:9px;background:repeating-conic-gradient(#ffffff 0 25%,#e4e4e4 0 50%) 0 0/3px 3px"></div><svg style="left:802px;top:272.2px;" width="8" height="12" viewBox="0 0 8 12"><path d="M1.5 2.5H5.5V4.5H3" stroke="#d0d0d0" stroke-width="0.7" fill="none"/><path d="M3 1L1.5 2.5L3 4" stroke="#d0d0d0" stroke-width="0.7" fill="none"/><rect x="1.5" y="7" width="5" height="4" fill="none" stroke="#d0d0d0" stroke-width="0.7"/><rect x="3" y="8.5" width="2" height="1.5" fill="#d0d0d0"/></svg><span class="t" style="left:810.9px;top:273.67px;color:#f4f4f4;font-size:7.0px;font-family:'Liberation Sans';transform:scaleX(0.9592);transform-origin:0 0;font-weight:bold">Capa de pintu...</span><svg style="left:864px;top:274.2px;" width="6" height="8" viewBox="0 0 6 8"><circle cx="3" cy="2.8" r="1.5" fill="#8fa9c8"/><path d="M3 4V7" stroke="#8fa9c8" stroke-width="0.8"/></svg><svg style="left:872px;top:273.7px;" width="28" height="9" viewBox="0 0 28 9"><rect x="2" y="4.2" width="6.2" height="4.3" fill="#8fa9c8"/><path d="M5.5 4.2V2.8A1.4 1.4 0 0 1 8.3 2.8V3.5" stroke="#8fa9c8" stroke-width="0.8" fill="none"/><path d="M10.5 4.8Q11.5 2.2 13.5 3.2Q14.8 4 15.5 7.8M15.2 2.5Q14 7.8 11.8 7.6Q10 7.2 10.5 4.8" stroke="#8fa9c8" stroke-width="0.9" fill="none"/><clipPath id="cc0"><circle cx="22.3" cy="4.3" r="3.4"/></clipPath><g clip-path="url(#cc0)"><rect x="19.0" y="1.0" width="2.2" height="2.2" fill="#8fa9c8" opacity="1"/><rect x="19.0" y="3.2" width="2.2" height="2.2" fill="#8fa9c8" opacity="0.35"/><rect x="19.0" y="5.4" width="2.2" height="2.2" fill="#8fa9c8" opacity="1"/><rect x="21.2" y="1.0" width="2.2" height="2.2" fill="#8fa9c8" opacity="0.35"/><rect x="21.2" y="3.2" width="2.2" height="2.2" fill="#8fa9c8" opacity="1"/><rect x="21.2" y="5.4" width="2.2" height="2.2" fill="#8fa9c8" opacity="0.35"/><rect x="23.4" y="1.0" width="2.2" height="2.2" fill="#8fa9c8" opacity="1"/><rect x="23.4" y="3.2" width="2.2" height="2.2" fill="#8fa9c8" opacity="0.35"/><rect x="23.4" y="5.4" width="2.2" height="2.2" fill="#8fa9c8" opacity="1"/></g></svg><svg style="left:770.0px;top:287.4px;" width="9" height="7" viewBox="0 0 9 7"><path d="M0.8 3.5Q4.5 -0.5 8.2 3.5Q4.5 7.5 0.8 3.5Z" fill="#e0e0e0"/><circle cx="4.5" cy="3.6" r="1.4" fill="#363636"/></svg><div style="left:782px;top:286.9px;width:6px;height:8px;background:#2f2f2f;"></div><div style="left:792px;top:286.4px;width:9px;height:9px;background:repeating-conic-gradient(#ffffff 0 25%,#e4e4e4 0 50%) 0 0/3px 3px"></div><svg style="left:792px;top:286.4px;" width="9" height="9" viewBox="0 0 9 9"><path d="M2 7L7 2M2 4Q4 2 5 4" stroke="#222" stroke-width="0.7" fill="none"/></svg><svg style="left:802px;top:284.9px;" width="8" height="12" viewBox="0 0 8 12"><path d="M1.5 2.5H5.5V4.5H3" stroke="#d0d0d0" stroke-width="0.7" fill="none"/><path d="M3 1L1.5 2.5L3 4" stroke="#d0d0d0" stroke-width="0.7" fill="none"/><rect x="1.5" y="7" width="5" height="4" fill="none" stroke="#d0d0d0" stroke-width="0.7"/><rect x="3" y="8.5" width="2" height="1.5" fill="#d0d0d0"/></svg><span class="t" style="left:810.9px;top:286.37px;color:#d8d8d8;font-size:7.0px;font-family:'Liberation Sans';transform:scaleX(0.9523);transform-origin:0 0;">Capa de pintura 3</span><svg style="left:864px;top:286.9px;" width="6" height="8" viewBox="0 0 6 8"><circle cx="3" cy="2.8" r="1.5" fill="#9a9a9a"/><path d="M3 4V7" stroke="#9a9a9a" stroke-width="0.8"/></svg><svg style="left:872px;top:286.4px;" width="28" height="9" viewBox="0 0 28 9"><rect x="2" y="4.2" width="6.2" height="4.3" fill="#9a9a9a"/><path d="M5.5 4.2V2.8A1.4 1.4 0 0 1 8.3 2.8V3.5" stroke="#9a9a9a" stroke-width="0.8" fill="none"/><path d="M10.5 4.8Q11.5 2.2 13.5 3.2Q14.8 4 15.5 7.8M15.2 2.5Q14 7.8 11.8 7.6Q10 7.2 10.5 4.8" stroke="#9a9a9a" stroke-width="0.9" fill="none"/><clipPath id="cc1"><circle cx="22.3" cy="4.3" r="3.4"/></clipPath><g clip-path="url(#cc1)"><rect x="19.0" y="1.0" width="2.2" height="2.2" fill="#9a9a9a" opacity="1"/><rect x="19.0" y="3.2" width="2.2" height="2.2" fill="#9a9a9a" opacity="0.35"/><rect x="19.0" y="5.4" width="2.2" height="2.2" fill="#9a9a9a" opacity="1"/><rect x="21.2" y="1.0" width="2.2" height="2.2" fill="#9a9a9a" opacity="0.35"/><rect x="21.2" y="3.2" width="2.2" height="2.2" fill="#9a9a9a" opacity="1"/><rect x="21.2" y="5.4" width="2.2" height="2.2" fill="#9a9a9a" opacity="0.35"/><rect x="23.4" y="1.0" width="2.2" height="2.2" fill="#9a9a9a" opacity="1"/><rect x="23.4" y="3.2" width="2.2" height="2.2" fill="#9a9a9a" opacity="0.35"/><rect x="23.4" y="5.4" width="2.2" height="2.2" fill="#9a9a9a" opacity="1"/></g></svg><svg style="left:770.0px;top:300.0px;" width="9" height="7" viewBox="0 0 9 7"><path d="M0.8 3.5Q4.5 -0.5 8.2 3.5Q4.5 7.5 0.8 3.5Z" fill="none" stroke="#5a5a5a" stroke-width="0.8"/></svg><div style="left:782px;top:299.5px;width:6px;height:8px;background:#2f2f2f;"></div><div style="left:792px;top:299.0px;width:9px;height:9px;background:#9a9a9a"></div><svg style="left:802px;top:297.5px;" width="8" height="12" viewBox="0 0 8 12"><path d="M1.5 2.5H5.5V4.5H3" stroke="#d0d0d0" stroke-width="0.7" fill="none"/><path d="M3 1L1.5 2.5L3 4" stroke="#d0d0d0" stroke-width="0.7" fill="none"/><rect x="1.5" y="7" width="5" height="4" fill="none" stroke="#d0d0d0" stroke-width="0.7"/><rect x="3" y="8.5" width="2" height="1.5" fill="#d0d0d0"/></svg><span class="t" style="left:810.9px;top:298.97px;color:#8a8a8a;font-size:7.0px;font-family:'Liberation Sans';transform:scaleX(0.9523);transform-origin:0 0;">Capa de pintura 1</span><svg style="left:864px;top:299.5px;" width="6" height="8" viewBox="0 0 6 8"><circle cx="3" cy="2.8" r="1.5" fill="#6a6a6a"/><path d="M3 4V7" stroke="#6a6a6a" stroke-width="0.8"/></svg><svg style="left:872px;top:299.0px;" width="28" height="9" viewBox="0 0 28 9"><rect x="2" y="4.2" width="6.2" height="4.3" fill="#6a6a6a"/><path d="M5.5 4.2V2.8A1.4 1.4 0 0 1 8.3 2.8V3.5" stroke="#6a6a6a" stroke-width="0.8" fill="none"/><path d="M10.5 4.8Q11.5 2.2 13.5 3.2Q14.8 4 15.5 7.8M15.2 2.5Q14 7.8 11.8 7.6Q10 7.2 10.5 4.8" stroke="#6a6a6a" stroke-width="0.9" fill="none"/><clipPath id="cc2"><circle cx="22.3" cy="4.3" r="3.4"/></clipPath><g clip-path="url(#cc2)"><rect x="19.0" y="1.0" width="2.2" height="2.2" fill="#6a6a6a" opacity="1"/><rect x="19.0" y="3.2" width="2.2" height="2.2" fill="#6a6a6a" opacity="0.35"/><rect x="19.0" y="5.4" width="2.2" height="2.2" fill="#6a6a6a" opacity="1"/><rect x="21.2" y="1.0" width="2.2" height="2.2" fill="#6a6a6a" opacity="0.35"/><rect x="21.2" y="3.2" width="2.2" height="2.2" fill="#6a6a6a" opacity="1"/><rect x="21.2" y="5.4" width="2.2" height="2.2" fill="#6a6a6a" opacity="0.35"/><rect x="23.4" y="1.0" width="2.2" height="2.2" fill="#6a6a6a" opacity="1"/><rect x="23.4" y="3.2" width="2.2" height="2.2" fill="#6a6a6a" opacity="0.35"/><rect x="23.4" y="5.4" width="2.2" height="2.2" fill="#6a6a6a" opacity="1"/></g></svg><svg style="left:770.0px;top:312.6px;" width="9" height="7" viewBox="0 0 9 7"><path d="M0.8 3.5Q4.5 -0.5 8.2 3.5Q4.5 7.5 0.8 3.5Z" fill="#e0e0e0"/><circle cx="4.5" cy="3.6" r="1.4" fill="#363636"/></svg><div style="left:782px;top:312.1px;width:6px;height:8px;background:#2f2f2f;"></div><div style="left:791px;top:312.6px;width:11px;height:7px;background:#ffffff;"></div><svg style="left:802px;top:310.1px;" width="8" height="12" viewBox="0 0 8 12"><path d="M1.5 2.5H5.5V4.5H3" stroke="#d0d0d0" stroke-width="0.7" fill="none"/><path d="M3 1L1.5 2.5L3 4" stroke="#d0d0d0" stroke-width="0.7" fill="none"/></svg><span class="t" style="left:810.9px;top:311.57px;color:#d8d8d8;font-size:7.0px;font-family:'Liberation Sans';transform:scaleX(0.8812);transform-origin:0 0;">Fondo</span><svg style="left:872px;top:311.6px;" width="28" height="9" viewBox="0 0 28 9"><rect x="2" y="4.2" width="6.2" height="4.3" fill="#9a9a9a"/><path d="M5.5 4.2V2.8A1.4 1.4 0 0 1 8.3 2.8V3.5" stroke="#9a9a9a" stroke-width="0.8" fill="none"/><path d="M10.5 4.8Q11.5 2.2 13.5 3.2Q14.8 4 15.5 7.8M15.2 2.5Q14 7.8 11.8 7.6Q10 7.2 10.5 4.8" stroke="#9a9a9a" stroke-width="0.9" fill="none"/><clipPath id="cc3"><circle cx="22.3" cy="4.3" r="3.4"/></clipPath><g clip-path="url(#cc3)"><rect x="19.0" y="1.0" width="2.2" height="2.2" fill="#9a9a9a" opacity="1"/><rect x="19.0" y="3.2" width="2.2" height="2.2" fill="#9a9a9a" opacity="0.35"/><rect x="19.0" y="5.4" width="2.2" height="2.2" fill="#9a9a9a" opacity="1"/><rect x="21.2" y="1.0" width="2.2" height="2.2" fill="#9a9a9a" opacity="0.35"/><rect x="21.2" y="3.2" width="2.2" height="2.2" fill="#9a9a9a" opacity="1"/><rect x="21.2" y="5.4" width="2.2" height="2.2" fill="#9a9a9a" opacity="0.35"/><rect x="23.4" y="1.0" width="2.2" height="2.2" fill="#9a9a9a" opacity="1"/><rect x="23.4" y="3.2" width="2.2" height="2.2" fill="#9a9a9a" opacity="0.35"/><rect x="23.4" y="5.4" width="2.2" height="2.2" fill="#9a9a9a" opacity="1"/></g></svg><svg style="left:769px;top:356px;" width="131" height="14" viewBox="0 0 131 14"><path d="M7 2.5V11.5M2.5 7H11.5" stroke="#dcdcdc" stroke-width="1.2"/><path d="M16 6L18 8L20 6Z" fill="#a0a0a0"/><rect x="25" y="4" width="7" height="7" fill="none" stroke="#d0d0d0" stroke-width="1"/><path d="M27 4V2H34V9H32" fill="none" stroke="#d0d0d0" stroke-width="1"/><path d="M40 5L44 9L48 5" stroke="#dcdcdc" stroke-width="1.2" fill="none"/><path d="M55 9L59 5L63 9" stroke="#dcdcdc" stroke-width="1.2" fill="none"/><path d="M69.5 4H78M69.5 7H78M69.5 10H78" stroke="#d0d0d0" stroke-width="1"/><rect x="71.5" y="3" width="1.6" height="2" fill="#d0d0d0"/><rect x="75" y="6" width="1.6" height="2" fill="#d0d0d0"/><path d="M82.5 6L84.5 8L86.5 6Z" fill="#a0a0a0"/><path d="M120 3.5H127M122 3.5V2.5H125V3.5" stroke="#d0d0d0" stroke-width="0.8" fill="none"/><path d="M120.8 4.5H126.2V11.5H120.8Z" fill="#d0d0d0"/></svg><div style="left:831px;top:372.5px;width:9px;height:1px;background:#6a6a6a;"></div><div style="left:770px;top:376px;width:62px;height:13px;background:#404040;"></div><div style="left:833px;top:375px;width:67px;height:14px;background:#4a4a4a;border:1px solid #3a3a3a;border-bottom:none;box-sizing:border-box"></div><span class="t" style="left:776.7px;top:377.57px;color:#cdcdcd;font-size:7.0px;font-family:'Liberation Sans';transform:scaleX(0.8947);transform-origin:0 0;">Opciones de la...</span><span class="t" style="left:839.7px;top:377.47px;color:#cdcdcd;font-size:7.0px;font-family:'Liberation Sans';transform:scaleX(0.8987);transform-origin:0 0;">Valores predefini...</span><svg style="left:769.0px;top:388.5px;" width="9" height="9" viewBox="0 0 9 9"><circle cx="4.5" cy="4.5" r="3.9" fill="none" stroke="#c8c8c8" stroke-width="0.9"/><rect x="2.6" y="4.2" width="3.8" height="2.6" fill="#c8c8c8"/><path d="M3.3 4.3V3.2A1.2 1.2 0 0 1 5.7 3.2V4.3" stroke="#c8c8c8" stroke-width="0.7" fill="none"/></svg><span class="t" style="left:780.2px;top:389.67px;color:#cdcdcd;font-size:7.0px;font-family:'Liberation Sans';transform:scaleX(0.9114);transform-origin:0 0;">Valores predefinidos de pincel</span><svg style="left:880px;top:388px;" width="20" height="10" viewBox="0 0 20 10"><rect x="1.5" y="3.5" width="5" height="5" fill="none" stroke="#d0d0d0" stroke-width="0.9"/><path d="M3.5 3.5V1.5H8.5V6.5H6.5" fill="none" stroke="#d0d0d0" stroke-width="0.9"/><path d="M12 1.5L18 7.5M18 1.5L12 7.5" stroke="#d8d8d8" stroke-width="1"/></svg><div style="left:769.5px;top:400.5px;width:59.5px;height:10px;background:#3d3d3d;border:1px solid #4a4a4a;box-sizing:border-box"></div><span class="t" style="left:772px;top:400.97px;color:#cdcdcd;font-size:7.0px;font-family:'Liberation Sans';transform:scaleX(0.8562);transform-origin:0 0;">Todas</span><svg style="left:822px;top:403px;" width="7" height="5" viewBox="0 0 7 5"><path d="M1 1L3.5 3.5L6 1Z" fill="#b8b8b8"/></svg><div style="left:831.5px;top:400.5px;width:42px;height:10px;background:#3d3d3d;border:1px solid #4a4a4a;box-sizing:border-box"></div><svg style="left:833px;top:400px;" width="8" height="11" viewBox="0 0 8 11"><path d="M2 1.5H6.5V9.5L4.2 7.5L2 9.5Z" fill="none" stroke="#d0d0d0" stroke-width="0.9"/></svg><span class="t" style="left:843.6px;top:400.77px;color:#cdcdcd;font-size:7.0px;font-family:'Liberation Sans';transform:scaleX(0.9071);transform-origin:0 0;">Etiqueta</span><svg style="left:868px;top:405px;" width="6" height="5" viewBox="0 0 6 5"><path d="M1.5 2L3 3.5L4.5 2" stroke="#b8b8b8" stroke-width="0.7" fill="none"/></svg><svg style="left:876px;top:400px;" width="10" height="11" viewBox="0 0 10 11"><path d="M1.5 2.5H8.5M1.5 5H8.5M1.5 7.5H8.5" stroke="#d8d8d8" stroke-width="1.2"/></svg><svg style="left:888px;top:399.5px;" width="11" height="12" viewBox="0 0 11 12"><rect x="1" y="1" width="9" height="10" fill="none" stroke="#d0d0d0" stroke-width="0.9"/><path d="M5.5 1V5.5" stroke="#d0d0d0" stroke-width="1"/></svg><div style="left:769.5px;top:411px;width:123px;height:37.5px;background:#333333;"></div><div style="left:892px;top:411px;width:8px;height:37.5px;background:#3c3c3c;"></div><svg style="left:892px;top:412px;" width="8" height="6" viewBox="0 0 8 6"><path d="M1.5 4.5L4 2L6.5 4.5Z" fill="#c0c0c0"/></svg><svg style="left:892px;top:441px;" width="8" height="6" viewBox="0 0 8 6"><path d="M1.5 1.5L4 4L6.5 1.5Z" fill="#c0c0c0"/></svg><div style="left:769.7px;top:411px;width:24.5px;height:5px;background:#d4d4d4;"></div><div style="left:769.7px;top:417px;width:24.5px;height:25px;background:#d6d6d6;"></div><div style="left:769.7px;top:443px;width:24.5px;height:5.5px;background:#d4d4d4;"></div><div style="left:795.6px;top:411px;width:24.5px;height:5px;background:#d4d4d4;"></div><div style="left:795.6px;top:417px;width:24.5px;height:25px;background:#d6d6d6;"></div><div style="left:795.6px;top:443px;width:24.5px;height:5.5px;background:#d4d4d4;"></div><div style="left:821.3px;top:411px;width:24.5px;height:5px;background:#d4d4d4;"></div><div style="left:821.3px;top:417px;width:24.5px;height:25px;background:#8db6de;"></div><div style="left:821.3px;top:443px;width:24.5px;height:5.5px;background:#d4d4d4;"></div><div style="left:846.2px;top:411px;width:24.5px;height:5px;background:#d4d4d4;"></div><div style="left:846.2px;top:417px;width:24.5px;height:25px;background:#d6d6d6;"></div><div style="left:846.2px;top:443px;width:24.5px;height:5.5px;background:#d4d4d4;"></div><div style="left:821.3px;top:417px;width:24.5px;height:25px;background:#8db6de;border:1px solid #3a6aa0;box-sizing:border-box"></div><svg style="left:769.7px;top:411.2px;" width="101" height="37.5" viewBox="0 0 101 37.5"><path d="M2 1.5Q10 5 22 2" stroke="#222" stroke-width="2" fill="none"/><path d="M27 3Q35 0 46 4" stroke="#333" stroke-width="2.4" stroke-dasharray="1.5 1" fill="none"/><circle cx="58" cy="3.5" r="1.3" fill="#888"/><circle cx="63" cy="3" r="1.3" fill="none" stroke="#888" stroke-width="0.6"/><path d="M15 12Q22 9 21 15Q18 21 11 18Q16 15 15 12Z" fill="#5fbf98"/><path d="M16 10L22 8" stroke="#5fbf98" stroke-width="1.5"/><path d="M4 15Q2 20 4 24" stroke="#666" stroke-width="1.6" fill="none"/><circle cx="9" cy="25" r="2.2" fill="none" stroke="#777" stroke-width="1.4" stroke-dasharray="1 0.7"/><circle cx="16" cy="24" r="2" fill="none" stroke="#777" stroke-width="1.3" stroke-dasharray="1 0.7"/><path d="M6 20L8 21" stroke="#666" stroke-width="1"/><path d="M34 20L47 8" stroke="#2a8a5a" stroke-width="2.6"/><path d="M33 21L36 18" stroke="#222" stroke-width="2"/><path d="M28 26Q34 31 45 23" stroke="#111" stroke-width="2.4" stroke-dasharray="1.6 0.8" fill="none"/><path d="M62 16L72 8" stroke="#1e4a98" stroke-width="2.6"/><path d="M60 17.5L62 16" stroke="#0d2a60" stroke-width="1.5"/><rect x="57" y="13" width="1.6" height="1.6" fill="#2a4a7a"/><path d="M57.5 20L63 27H70L74 20" stroke="#2a5aa0" stroke-width="1" stroke-dasharray="1.2 1.2" fill="none"/><path d="M88 17L99 8" stroke="#b03030" stroke-width="2.6"/><path d="M86 18.5L88 17" stroke="#601010" stroke-width="1.4"/><rect x="82" y="13" width="1.6" height="1.6" fill="#444"/><rect x="77.2" y="19.5" width="1.5" height="1.5" fill="#50e8e8"/><rect x="81.0" y="19.5" width="1.5" height="1.5" fill="#50e8e8"/><rect x="84.8" y="19.5" width="1.5" height="1.5" fill="#50e8e8"/><rect x="88.6" y="19.5" width="1.5" height="1.5" fill="#ff6070"/><rect x="79.1" y="21.4" width="1.5" height="1.5" fill="#50e8e8"/><rect x="82.9" y="21.4" width="1.5" height="1.5" fill="#50e8e8"/><rect x="86.7" y="21.4" width="1.5" height="1.5" fill="#50e8e8"/><rect x="90.5" y="21.4" width="1.5" height="1.5" fill="#ff6070"/><rect x="77.2" y="23.3" width="1.5" height="1.5" fill="#50e8e8"/><rect x="81.0" y="23.3" width="1.5" height="1.5" fill="#50e8e8"/><rect x="84.8" y="23.3" width="1.5" height="1.5" fill="#50e8e8"/><rect x="88.6" y="23.3" width="1.5" height="1.5" fill="#ff6070"/><rect x="79.1" y="25.2" width="1.5" height="1.5" fill="#50e8e8"/><rect x="82.9" y="25.2" width="1.5" height="1.5" fill="#50e8e8"/><rect x="86.7" y="25.2" width="1.5" height="1.5" fill="#ff6070"/><rect x="90.5" y="25.2" width="1.5" height="1.5" fill="#ff6070"/><rect x="77.2" y="27.1" width="1.5" height="1.5" fill="#ff6070"/><rect x="81.0" y="27.1" width="1.5" height="1.5" fill="#ff6070"/><rect x="84.8" y="27.1" width="1.5" height="1.5" fill="#ff6070"/><rect x="88.6" y="27.1" width="1.5" height="1.5" fill="#ff6070"/><rect x="79.1" y="29.0" width="1.5" height="1.5" fill="#ff6070"/><rect x="82.9" y="29.0" width="1.5" height="1.5" fill="#ff6070"/><rect x="86.7" y="29.0" width="1.5" height="1.5" fill="#ff6070"/><path d="M20 37L24 33" stroke="#d09030" stroke-width="1.6"/><path d="M70 37L74 33" stroke="#d8d070" stroke-width="1.6"/><path d="M95 37L99 33" stroke="#f0f0f0" stroke-width="1.6"/><path d="M2 33.5H18M27 33.5H45M52 33.5H68M77 33.5H94" stroke="#aaa" stroke-width="0.6"/></svg><div style="left:769.7px;top:449.7px;width:71.3px;height:11.1px;background:#3a3a3a;"></div><span class="t" style="left:771px;top:451.97px;color:#767676;font-size:7.0px;font-family:'Liberation Sans';transform:scaleX(0.8258);transform-origin:0 0;">Buscar</span><svg style="left:845px;top:450px;" width="8" height="10" viewBox="0 0 8 10"><path d="M1 5L3 8.5L7 1.5" stroke="#e0e0e0" stroke-width="1" fill="none"/></svg><span class="t" style="left:855.3px;top:451.97px;color:#cdcdcd;font-size:7.0px;font-family:'Liberation Sans';transform:scaleX(0.9318);transform-origin:0 0;">Filtrar etiqueta</span><div style="left:0px;top:461px;width:900px;height:17px;background:#474747;"></div><div style="left:0px;top:461px;width:900px;height:1px;background:#3f3f3f;"></div><svg style="left:2px;top:465px;" width="10" height="10" viewBox="0 0 10 10"><rect x="1" y="1" width="8" height="8" fill="none" stroke="#c8c8c8" stroke-width="0.9"/><path d="M2.5 2.5L7.5 7.5M7.5 2.5L2.5 7.5" stroke="#9a9a9a" stroke-width="0.6"/></svg><span class="t" style="left:17px;top:466.67px;color:#d0d0d0;font-size:7.0px;font-family:'Liberation Sans';transform:scaleX(1.0042);transform-origin:0 0;">u) Pixel Art</span><span class="t" style="left:202px;top:466.67px;color:#d0d0d0;font-size:7.0px;font-family:'Liberation Sans';transform:scaleX(0.9971);transform-origin:0 0;">RGB/Alfa (Entero de 8 bits/canal)</span><span class="t" style="left:308.9px;top:466.67px;color:#d0d0d0;font-size:7.0px;font-family:'Liberation Sans';transform:scaleX(0.9777);transform-origin:0 0;">sRGB-elle-V2-srgbtrc.icc</span><div style="left:609px;top:464px;width:1px;height:12px;background:#3a3a3a;"></div><span class="t" style="left:612.2px;top:466.87px;color:#d0d0d0;font-size:7.0px;font-family:'Liberation Sans';transform:scaleX(0.9542);transform-origin:0 0;">1.400 x 800 (149,5 MiB)</span><div style="left:685.5px;top:464px;width:1px;height:12px;background:#3a3a3a;"></div><div style="left:689.3px;top:464.7px;width:13px;height:13px;border-radius:50%;background:#2b2b2b"></div><svg style="left:691px;top:469px;" width="10" height="4" viewBox="0 0 10 4"><path d="M1 2H3M4 2H6M7 2H9" stroke="#e8e8e8" stroke-width="0.9"/></svg><span class="t" style="left:705px;top:466.87px;color:#d0d0d0;font-size:7.0px;font-family:'Liberation Sans';transform:scaleX(0.9125);transform-origin:0 0;">0,00°</span><span class="t" style="left:821.8px;top:466.87px;color:#d0d0d0;font-size:7.0px;font-family:'Liberation Sans';transform:scaleX(0.9064);transform-origin:0 0;">66,7%</span><div style="left:848px;top:469.5px;width:40px;height:2px;background:#2e2e2e;"></div><div style="left:848px;top:469.5px;width:5px;height:2px;background:#6a9ad0;"></div><div style="left:855.5px;top:467px;width:6px;height:7px;background:#3c3c3c;border:1px solid #5a5a5a;box-sizing:border-box"></div><svg style="left:888px;top:465px;" width="11" height="11" viewBox="0 0 11 11"><rect x="1" y="1" width="9" height="7" fill="none" stroke="#d8d8d8" stroke-width="0.9"/><path d="M3 10H8M5.5 8V10" stroke="#d8d8d8" stroke-width="0.9"/><circle cx="5.5" cy="4.5" r="0.8" fill="#d8d8d8"/></svg><svg style="left:187px;top:131px" width="438" height="250" viewBox="187 131 438 250"><defs><filter id="bl2" x="-50%" y="-50%" width="200%" height="200%"><feGaussianBlur stdDeviation="2.2"/></filter></defs><g filter="url(#bl2)" fill="#8a8a8a"><ellipse cx="338" cy="230" rx="7" ry="5" opacity="0.35"/><ellipse cx="347" cy="215" rx="5" ry="6" opacity="0.25"/><ellipse cx="312" cy="258" rx="12" ry="7" opacity="0.22"/><ellipse cx="382" cy="228" rx="5" ry="4" opacity="0.25"/><ellipse cx="360" cy="262" rx="6" ry="9" opacity="0.12"/><ellipse cx="296" cy="236" rx="5" ry="4" opacity="0.2"/></g><defs><clipPath id="hc0"><polygon points="287.0,262.0 298.0,270.0 304.0,280.0 309.0,293.0 346.0,294.0 352.0,280.0 346.0,262.0 334.0,250.0 316.0,252.0 300.0,246.0 291.0,248.0"/></clipPath><clipPath id="hc1"><polygon points="284.0,291.0 300.0,301.0 330.0,303.0 356.0,298.0 372.0,294.0 374.0,306.0 365.0,318.0 330.0,322.0 300.0,317.0 285.0,320.0"/></clipPath><clipPath id="hc2"><polygon points="256.0,362.0 261.0,338.0 276.0,324.0 300.0,320.0 314.0,326.0 300.0,332.0 285.0,336.0 276.0,350.0 270.0,366.0 268.0,382.0 262.0,382.0"/></clipPath><clipPath id="hc3"><polygon points="272.0,382.0 272.0,358.0 281.0,342.0 292.0,333.0 320.0,332.0 322.0,340.0 300.0,352.0 292.0,370.0 288.0,382.0"/></clipPath><clipPath id="hc4"><polygon points="382.0,382.0 400.0,360.0 418.0,342.0 432.0,327.0 424.0,350.0 410.0,368.0 400.0,382.0"/></clipPath><clipPath id="hc5"><polygon points="326.0,236.0 340.0,228.0 346.0,236.0 340.0,244.0 330.0,246.0"/></clipPath><clipPath id="hc6"><polygon points="348.0,214.0 356.0,208.0 360.0,214.0 354.0,220.0"/></clipPath><clipPath id="hc7"><polygon points="362.0,300.0 370.0,296.0 376.0,310.0 368.0,314.0"/></clipPath></defs><path d="M226.9 246.7L335.9 175.9M228.4 249.0L337.4 178.2M229.9 251.4L338.9 180.6M231.4 253.7L340.5 182.9M233.0 256.1L342.0 185.3M234.5 258.4L343.5 187.6M236.0 260.8L345.0 190.0M237.5 263.1L346.6 192.3M239.1 265.5L348.1 194.7M240.6 267.8L349.6 197.0M242.1 270.2L351.1 199.4M243.6 272.5L352.7 201.7M245.2 274.9L354.2 204.1M246.7 277.2L355.7 206.4M248.2 279.6L357.2 208.8M249.7 281.9L358.8 211.1M251.3 284.3L360.3 213.5M252.8 286.6L361.8 215.8M254.3 289.0L363.3 218.2M255.8 291.3L364.9 220.5M257.4 293.7L366.4 222.9M258.9 296.0L367.9 225.2M260.4 298.4L369.4 227.6M261.9 300.7L371.0 229.9M263.5 303.1L372.5 232.3M265.0 305.4L374.0 234.6M266.5 307.7L375.5 236.9M268.0 310.1L377.1 239.3M269.6 312.4L378.6 241.6M271.1 314.8L380.1 244.0M272.6 317.1L381.6 246.3M274.1 319.5L383.2 248.7M275.7 321.8L384.7 251.0M277.2 324.2L386.2 253.4M278.7 326.5L387.7 255.7M280.2 328.9L389.3 258.1M281.8 331.2L390.8 260.4M283.3 333.6L392.3 262.8M284.8 335.9L393.8 265.1M286.3 338.3L395.4 267.5M287.9 340.6L396.9 269.8M289.4 343.0L398.4 272.2M290.9 345.3L399.9 274.5M292.4 347.7L401.5 276.9M294.0 350.0L403.0 279.2M295.5 352.4L404.5 281.6M297.0 354.7L406.0 283.9M298.5 357.1L407.6 286.3M300.1 359.4L409.1 288.6M301.6 361.8L410.6 291.0M303.1 364.1L412.1 293.3" stroke="#7a7a7a" stroke-width="0.6" clip-path="url(#hc0)"/><path d="M198.9 291.4L336.8 175.7M200.7 293.6L338.6 177.9M202.5 295.7L340.4 180.0M204.3 297.9L342.2 182.2M206.1 300.0L343.9 184.3M207.9 302.1L345.7 186.4M209.7 304.3L347.5 188.6M211.5 306.4L349.3 190.7M213.3 308.6L351.1 192.9M215.1 310.7L352.9 195.0M216.9 312.9L354.7 197.2M218.7 315.0L356.5 199.3M220.5 317.2L358.3 201.5M222.3 319.3L360.1 203.6M224.1 321.5L361.9 205.8M225.9 323.6L363.7 207.9M227.7 325.7L365.5 210.0M229.5 327.9L367.3 212.2M231.3 330.0L369.1 214.3M233.1 332.2L370.9 216.5M234.9 334.3L372.7 218.6M236.7 336.5L374.5 220.8M238.5 338.6L376.3 222.9M240.3 340.8L378.1 225.1M242.1 342.9L379.9 227.2M243.9 345.0L381.7 229.3M245.7 347.2L383.5 231.5M247.5 349.3L385.3 233.6M249.3 351.5L387.1 235.8M251.1 353.6L388.9 237.9M252.9 355.8L390.7 240.1M254.7 357.9L392.5 242.2M256.5 360.1L394.3 244.4M258.3 362.2L396.1 246.5M260.1 364.4L397.9 248.6M261.9 366.5L399.7 250.8M263.7 368.6L401.5 252.9M265.5 370.8L403.3 255.1M267.3 372.9L405.1 257.2M269.1 375.1L406.9 259.4M270.9 377.2L408.7 261.5M272.7 379.4L410.5 263.7M274.5 381.5L412.3 265.8M276.3 383.7L414.1 268.0M278.1 385.8L415.9 270.1M279.9 387.9L417.7 272.2M281.7 390.1L419.5 274.4M283.5 392.2L421.3 276.5M285.3 394.4L423.1 278.7M287.1 396.5L424.9 280.8M288.9 398.7L426.7 283.0M290.7 400.8L428.5 285.1M292.5 403.0L430.3 287.3M294.3 405.1L432.1 289.4M296.1 407.2L433.9 291.5M297.9 409.4L435.7 293.7M299.7 411.5L437.5 295.8M301.5 413.7L439.3 298.0M303.3 415.8L441.1 300.1M305.1 418.0L442.9 302.3M306.9 420.1L444.7 304.4M308.7 422.3L446.5 306.6M310.5 424.4L448.3 308.7M312.3 426.6L450.1 310.9M314.1 428.7L451.9 313.0M315.8 430.8L453.7 315.1M317.6 433.0L455.5 317.3M319.4 435.1L457.3 319.4M321.2 437.3L459.1 321.6" stroke="#6e6e6e" stroke-width="0.6" clip-path="url(#hc1)"/><path d="M196.2 364.5L267.3 262.9M198.3 366.0L269.4 264.4M200.5 367.5L271.6 265.9M202.6 369.0L273.7 267.4M204.7 370.5L275.8 268.9M206.8 372.0L278.0 270.4M209.0 373.5L280.1 271.9M211.1 374.9L282.2 273.4M213.2 376.4L284.4 274.9M215.4 377.9L286.5 276.4M217.5 379.4L288.6 277.8M219.6 380.9L290.7 279.3M221.8 382.4L292.9 280.8M223.9 383.9L295.0 282.3M226.0 385.4L297.1 283.8M228.1 386.9L299.3 285.3M230.3 388.4L301.4 286.8M232.4 389.9L303.5 288.3M234.5 391.3L305.7 289.8M236.7 392.8L307.8 291.3M238.8 394.3L309.9 292.8M240.9 395.8L312.0 294.2M243.0 397.3L314.2 295.7M245.2 398.8L316.3 297.2M247.3 400.3L318.4 298.7M249.4 401.8L320.6 300.2M251.6 403.3L322.7 301.7M253.7 404.8L324.8 303.2M255.8 406.3L327.0 304.7M258.0 407.8L329.1 306.2M260.1 409.2L331.2 307.7M262.2 410.7L333.3 309.2M264.3 412.2L335.5 310.7M266.5 413.7L337.6 312.1M268.6 415.2L339.7 313.6M270.7 416.7L341.9 315.1M272.9 418.2L344.0 316.6M275.0 419.7L346.1 318.1M277.1 421.2L348.2 319.6M279.3 422.7L350.4 321.1M281.4 424.2L352.5 322.6M283.5 425.6L354.6 324.1M285.6 427.1L356.8 325.6M287.8 428.6L358.9 327.1M289.9 430.1L361.0 328.5M292.0 431.6L363.2 330.0M294.2 433.1L365.3 331.5M296.3 434.6L367.4 333.0M298.4 436.1L369.5 334.5M300.6 437.6L371.7 336.0M302.7 439.1L373.8 337.5" stroke="#7a7a7a" stroke-width="0.6" clip-path="url(#hc2)"/><path d="M223.7 363.2L285.2 284.4M226.0 365.0L287.6 286.2M228.4 366.8L290.0 288.0M230.8 368.7L292.3 289.9M233.1 370.5L294.7 291.7M235.5 372.4L297.1 293.6M237.8 374.2L299.4 295.4M240.2 376.1L301.8 297.3M242.6 377.9L304.1 299.1M244.9 379.8L306.5 301.0M247.3 381.6L308.9 302.8M249.7 383.5L311.2 304.7M252.0 385.3L313.6 306.5M254.4 387.2L316.0 308.4M256.8 389.0L318.3 310.2M259.1 390.9L320.7 312.1M261.5 392.7L323.1 313.9M263.9 394.6L325.4 315.8M266.2 396.4L327.8 317.6M268.6 398.2L330.1 319.4M270.9 400.1L332.5 321.3M273.3 401.9L334.9 323.1M275.7 403.8L337.2 325.0M278.0 405.6L339.6 326.8M280.4 407.5L342.0 328.7M282.8 409.3L344.3 330.5M285.1 411.2L346.7 332.4M287.5 413.0L349.1 334.2M289.9 414.9L351.4 336.1M292.2 416.7L353.8 337.9M294.6 418.6L356.2 339.8M296.9 420.4L358.5 341.6M299.3 422.3L360.9 343.5M301.7 424.1L363.2 345.3M304.0 426.0L365.6 347.2M306.4 427.8L368.0 349.0M308.8 429.6L370.3 350.8" stroke="#909090" stroke-width="0.55" clip-path="url(#hc3)"/><path d="M328.8 368.1L390.3 276.9M330.6 369.3L392.2 278.1M332.5 370.6L394.0 279.4M334.3 371.8L395.8 280.6M336.1 373.0L397.6 281.8M337.9 374.3L399.5 283.1M339.8 375.5L401.3 284.3M341.6 376.7L403.1 285.5M343.4 378.0L404.9 286.8M345.2 379.2L406.7 288.0M347.1 380.4L408.6 289.2M348.9 381.6L410.4 290.4M350.7 382.9L412.2 291.7M352.5 384.1L414.0 292.9M354.4 385.3L415.9 294.1M356.2 386.6L417.7 295.4M358.0 387.8L419.5 296.6M359.8 389.0L421.3 297.8M361.7 390.3L423.2 299.1M363.5 391.5L425.0 300.3M365.3 392.7L426.8 301.5M367.1 393.9L428.6 302.8M368.9 395.2L430.5 304.0M370.8 396.4L432.3 305.2M372.6 397.6L434.1 306.4M374.4 398.9L435.9 307.7M376.2 400.1L437.8 308.9M378.1 401.3L439.6 310.1M379.9 402.6L441.4 311.4M381.7 403.8L443.2 312.6M383.5 405.0L445.1 313.8M385.4 406.2L446.9 315.1M387.2 407.5L448.7 316.3M389.0 408.7L450.5 317.5M390.8 409.9L452.3 318.7M392.7 411.2L454.2 320.0M394.5 412.4L456.0 321.2M396.3 413.6L457.8 322.4M398.1 414.9L459.6 323.7M400.0 416.1L461.5 324.9M401.8 417.3L463.3 326.1M403.6 418.6L465.1 327.4M405.4 419.8L466.9 328.6M407.3 421.0L468.8 329.8M409.1 422.2L470.6 331.0M410.9 423.5L472.4 332.3M412.7 424.7L474.2 333.5M414.5 425.9L476.1 334.7M416.4 427.2L477.9 336.0M418.2 428.4L479.7 337.2M420.0 429.6L481.5 338.4M421.8 430.9L483.4 339.7M423.7 432.1L485.2 340.9" stroke="#555555" stroke-width="0.6" clip-path="url(#hc4)"/><path d="M305.2 242.3L325.2 207.7M307.3 243.5L327.3 208.9M309.4 244.7L329.4 210.1M311.5 245.9L331.5 211.3M313.5 247.1L333.5 212.5M315.6 248.3L335.6 213.7M317.7 249.5L337.7 214.9M319.8 250.7L339.8 216.1M321.8 251.9L341.8 217.3M323.9 253.1L343.9 218.5M326.0 254.3L346.0 219.7M328.1 255.5L348.1 220.9M330.2 256.7L350.2 222.1M332.2 257.9L352.2 223.3M334.3 259.1L354.3 224.5M336.4 260.3L356.4 225.7M338.5 261.5L358.5 226.9M340.5 262.7L360.5 228.1M342.6 263.9L362.6 229.3M344.7 265.1L364.7 230.5M346.8 266.3L366.8 231.7" stroke="#9a9a9a" stroke-width="0.6" clip-path="url(#hc5)"/><path d="M334.7 216.7L346.7 195.9M336.6 217.8L348.6 197.0M338.5 218.9L350.5 198.1M340.4 220.0L352.4 199.2M342.3 221.1L354.3 200.3M344.2 222.2L356.2 201.4M346.1 223.3L358.1 202.5M348.0 224.4L360.0 203.6M349.9 225.5L361.9 204.7M351.8 226.6L363.8 205.8M353.7 227.7L365.7 206.9M355.6 228.8L367.6 208.0M357.5 229.9L369.5 209.1M359.4 231.0L371.4 210.2M361.3 232.1L373.3 211.3" stroke="#a8a8a8" stroke-width="0.55" clip-path="url(#hc6)"/><path d="M340.2 304.3L363.3 276.7M342.1 305.9L365.2 278.4M344.0 307.5L367.2 280.0M345.9 309.1L369.1 281.6M347.9 310.8L371.0 283.2M349.8 312.4L372.9 284.8M351.7 314.0L374.8 286.4M353.6 315.6L376.7 288.0M355.5 317.2L378.7 289.6M357.4 318.8L380.6 291.2M359.3 320.4L382.5 292.8M361.3 322.0L384.4 294.4M363.2 323.6L386.3 296.0M365.1 325.2L388.2 297.6M367.0 326.8L390.1 299.2M368.9 328.4L392.1 300.9M370.8 330.0L394.0 302.5M372.8 331.6L395.9 304.1M374.7 333.3L397.8 305.7" stroke="#a8a8a8" stroke-width="0.5" clip-path="url(#hc7)"/><path d="M258.5 250.0 C258.2 248.5 257.5 244.4 256.7 241.0 C255.9 237.6 253.7 234.4 253.8 229.7 C254.0 225.0 255.2 219.0 257.6 212.7 C260.0 206.4 264.6 196.7 268.0 192.0 C271.4 187.3 272.0 187.9 278.3 184.5 C284.6 181.1 301.1 173.5 305.6 171.3" stroke="#101010" stroke-width="1.54" fill="none" stroke-linecap="round" stroke-linejoin="round"/><path d="M305.6 171.3 L309.0 171.8 L318.5 174.6" stroke="#101010" stroke-width="1.40" fill="none" stroke-linecap="round" stroke-linejoin="round"/><path d="M318.5 174.6 C318.8 173.9 318.6 171.7 320.5 170.5 C322.4 169.3 326.5 168.5 330.0 167.6 C333.5 166.7 337.5 164.4 341.7 165.0 C345.9 165.6 350.9 168.7 355.0 171.3 C359.1 173.9 363.2 178.4 366.3 180.7 C369.4 183.0 371.7 184.3 373.9 185.1 C376.1 185.9 377.7 185.7 379.5 185.5 C381.3 185.3 383.8 184.4 384.6 184.2" stroke="#101010" stroke-width="1.54" fill="none" stroke-linecap="round" stroke-linejoin="round"/><path d="M384.6 184.2 C384.1 184.9 382.9 187.1 381.4 188.2 C379.9 189.3 376.7 190.4 375.8 190.8" stroke="#101010" stroke-width="1.40" fill="none" stroke-linecap="round" stroke-linejoin="round"/><path d="M365.4 184.2 C367.1 185.4 373.8 189.8 375.8 191.4 C377.8 193.0 377.2 192.5 377.6 193.9 C378.0 195.3 378.2 199.0 378.3 200.0" stroke="#101010" stroke-width="1.40" fill="none" stroke-linecap="round" stroke-linejoin="round"/><path d="M378.3 200.0 C377.9 201.3 376.6 205.2 376.0 208.0 C375.4 210.8 374.7 215.5 374.4 217.0" stroke="#101010" stroke-width="1.54" fill="none" stroke-linecap="round" stroke-linejoin="round"/><path d="M355.1 189.3 C356.5 190.6 360.7 193.7 363.5 196.9 C366.3 200.1 370.1 205.2 371.9 208.6 C373.7 211.9 374.0 215.6 374.4 217.0" stroke="#101010" stroke-width="1.40" fill="none" stroke-linecap="round" stroke-linejoin="round"/><path d="M339.2 199.4 L342.6 189.3 L345.9 195.2 L352.6 186.8 L351.8 204.4" stroke="#101010" stroke-width="1.54" fill="none" stroke-linecap="round" stroke-linejoin="round"/><path d="M344.0 193.0 L346.5 195.0" stroke="#101010" stroke-width="1.12" fill="none" stroke-linecap="round" stroke-linejoin="round"/><path d="M318.8 204.3 L325.4 198.6 L333.9 202.4" stroke="#101010" stroke-width="1.40" fill="none" stroke-linecap="round" stroke-linejoin="round"/><path d="M322.0 200.5 L326.5 203.0" stroke="#101010" stroke-width="1.12" fill="none" stroke-linecap="round" stroke-linejoin="round"/><path d="M318.8 204.3 C318.7 206.3 317.8 212.1 318.4 216.5 C319.0 220.9 322.0 228.4 322.7 230.8" stroke="#101010" stroke-width="1.54" fill="none" stroke-linecap="round" stroke-linejoin="round"/><path d="M285.0 226.9 L296.0 236.0 L308.8 246.7" stroke="#101010" stroke-width="1.54" fill="none" stroke-linecap="round" stroke-linejoin="round"/><path d="M304.9 217.9 L308.8 246.7" stroke="#101010" stroke-width="1.54" fill="none" stroke-linecap="round" stroke-linejoin="round"/><path d="M304.9 217.9 L321.7 231.8" stroke="#101010" stroke-width="1.40" fill="none" stroke-linecap="round" stroke-linejoin="round"/><path d="M307.8 234.8 C309.8 234.1 315.7 231.6 319.8 230.8 C323.9 230.0 329.7 229.6 332.7 229.9 C335.7 230.2 336.9 232.3 337.7 232.8" stroke="#101010" stroke-width="1.40" fill="none" stroke-linecap="round" stroke-linejoin="round"/><path d="M302.9 249.7 C305.0 249.4 311.3 249.0 315.8 247.7 C320.3 246.4 326.6 243.6 329.7 241.8 C332.8 240.0 333.9 237.6 334.7 236.8" stroke="#101010" stroke-width="1.54" fill="none" stroke-linecap="round" stroke-linejoin="round"/><path d="M309.8 253.7 C312.4 253.0 321.4 251.7 325.7 249.7 C330.0 247.7 334.0 243.1 335.7 241.8" stroke="#101010" stroke-width="1.12" fill="none" stroke-linecap="round" stroke-linejoin="round"/><path d="M323.3 239.8m-3.4 0a3.4 3.4 0 1 0 6.8 0a3.4 3.4 0 1 0 -6.8 0" stroke="#101010" stroke-width="1.82" fill="none" stroke-linecap="round" stroke-linejoin="round"/><path d="M323.3 239.8m-0.9 0a0.9 0.9 0 1 0 1.8 0a0.9 0.9 0 1 0 -1.8 0" stroke="#101010" stroke-width="2.38" fill="none" stroke-linecap="round" stroke-linejoin="round"/><path d="M355.1 222.0 C355.7 221.1 357.1 217.9 358.5 216.5 C359.9 215.1 361.0 214.5 363.5 213.6 C366.0 212.7 371.1 211.2 373.6 211.1 C376.1 211.0 377.8 212.5 378.6 212.8" stroke="#101010" stroke-width="1.68" fill="none" stroke-linecap="round" stroke-linejoin="round"/><path d="M355.1 225.4 C357.1 225.9 363.0 228.2 366.9 228.2 C370.8 228.2 376.7 225.9 378.6 225.4" stroke="#101010" stroke-width="2.10" fill="none" stroke-linecap="round" stroke-linejoin="round"/><path d="M357.0 227.5 C358.7 227.9 363.5 230.1 367.0 230.2 C370.5 230.3 376.2 228.4 378.0 228.0" stroke="#505050" stroke-width="2.24" fill="none" stroke-linecap="round" stroke-linejoin="round"/><path d="M368.5 219.5m-3.9 0a3.9 3.9 0 1 0 7.8 0a3.9 3.9 0 1 0 -7.8 0" stroke="#101010" stroke-width="1.82" fill="none" stroke-linecap="round" stroke-linejoin="round"/><path d="M368.5 219.5m-1.1 0a1.1 1.1 0 1 0 2.2 0a1.1 1.1 0 1 0 -2.2 0" stroke="#101010" stroke-width="2.66" fill="none" stroke-linecap="round" stroke-linejoin="round"/><path d="M343.4 215.3 C344.7 216.7 348.5 220.7 351.0 223.5 C353.5 226.3 356.1 229.4 358.5 232.0 C360.9 234.6 364.3 237.7 365.5 238.8" stroke="#101010" stroke-width="1.33" fill="none" stroke-linecap="round" stroke-linejoin="round"/><path d="M367.5 243.8 L357.5 252.7 L366.5 256.7" stroke="#101010" stroke-width="1.54" fill="none" stroke-linecap="round" stroke-linejoin="round"/><path d="M367.5 243.8 L366.5 256.7" stroke="#101010" stroke-width="1.54" fill="none" stroke-linecap="round" stroke-linejoin="round"/><path d="M369.5 262.5 L372.0 264.5" stroke="#101010" stroke-width="1.26" fill="none" stroke-linecap="round" stroke-linejoin="round"/><path d="M377.7 210.3 C378.7 212.8 382.1 221.3 383.6 225.4 C385.2 229.5 386.0 231.2 387.0 235.0 C388.0 238.8 388.8 243.5 389.5 248.0 C390.2 252.5 390.9 257.0 391.3 262.0 C391.7 267.0 392.1 274.2 391.8 278.0 C391.5 281.8 390.4 282.4 389.3 284.5 C388.2 286.6 386.0 289.5 385.4 290.5" stroke="#101010" stroke-width="1.54" fill="none" stroke-linecap="round" stroke-linejoin="round"/><path d="M348.6 276.6 C351.1 276.1 359.5 274.6 363.5 273.6 C367.5 272.6 370.3 271.6 372.5 270.8 C374.7 270.0 375.4 268.9 376.5 268.8 C377.6 268.7 377.7 270.4 379.0 270.3 C380.3 270.2 383.5 268.6 384.4 268.2" stroke="#101010" stroke-width="1.54" fill="none" stroke-linecap="round" stroke-linejoin="round"/><path d="M351.6 281.5 C354.2 281.2 362.0 280.9 367.5 279.6 C373.0 278.3 381.6 274.6 384.4 273.6" stroke="#101010" stroke-width="1.40" fill="none" stroke-linecap="round" stroke-linejoin="round"/><path d="M288.3 276.6 C289.0 277.6 290.4 280.7 292.3 282.5 C294.2 284.3 296.9 285.8 299.7 287.6 C302.5 289.4 301.6 292.1 309.2 293.1 C316.8 294.1 334.9 293.8 345.0 293.8 C355.1 293.8 363.3 293.6 370.0 293.0 C376.7 292.4 382.8 290.9 385.4 290.5" stroke="#101010" stroke-width="1.54" fill="none" stroke-linecap="round" stroke-linejoin="round"/><path d="M285.8 226.5 L294.6 236.7" stroke="#101010" stroke-width="1.40" fill="none" stroke-linecap="round" stroke-linejoin="round"/><path d="M294.6 236.7 C293.9 237.4 291.6 238.9 290.2 241.1 C288.8 243.3 287.0 246.7 286.5 249.9 C286.0 253.1 285.4 256.7 287.2 260.1 C289.0 263.5 294.9 268.4 297.5 270.4 C300.1 272.4 302.1 271.7 303.0 272.0" stroke="#101010" stroke-width="1.54" fill="none" stroke-linecap="round" stroke-linejoin="round"/><path d="M287.2 249.9 C288.2 252.1 291.0 260.2 293.1 263.1 C295.2 266.0 298.9 266.8 300.0 267.5" stroke="#101010" stroke-width="1.26" fill="none" stroke-linecap="round" stroke-linejoin="round"/><path d="M255.0 225.0 C254.9 225.7 253.8 226.7 254.3 229.4 C254.8 232.1 257.4 238.2 258.0 241.1 C258.6 244.0 258.7 244.3 258.0 247.0 C257.3 249.7 254.9 254.6 253.6 257.2 C252.2 259.8 251.7 261.1 249.9 262.3 C248.1 263.5 243.8 264.1 242.6 264.5" stroke="#101010" stroke-width="1.54" fill="none" stroke-linecap="round" stroke-linejoin="round"/><path d="M242.6 264.5 C243.7 264.9 246.6 266.4 249.2 266.7 C251.8 266.9 254.0 267.7 258.0 266.0 C262.0 264.3 270.8 258.1 273.3 256.5" stroke="#101010" stroke-width="1.54" fill="none" stroke-linecap="round" stroke-linejoin="round"/><path d="M267.5 244.0 C266.6 246.2 264.0 253.5 262.4 257.2 C260.8 260.9 259.2 263.6 258.0 266.0 C256.8 268.4 256.2 269.5 255.0 271.9 C253.8 274.3 252.9 278.4 250.6 280.6 C248.3 282.8 242.7 284.3 241.1 285.0" stroke="#101010" stroke-width="1.54" fill="none" stroke-linecap="round" stroke-linejoin="round"/><path d="M241.1 285.0 L250.6 288.0 L259.4 287.2 L260.2 295.0" stroke="#101010" stroke-width="1.54" fill="none" stroke-linecap="round" stroke-linejoin="round"/><path d="M274.8 254.3 L272.6 270.4" stroke="#101010" stroke-width="1.40" fill="none" stroke-linecap="round" stroke-linejoin="round"/><path d="M281.4 258.7 L277.0 266.0" stroke="#101010" stroke-width="1.26" fill="none" stroke-linecap="round" stroke-linejoin="round"/><path d="M281.4 260.1 L285.0 271.9" stroke="#101010" stroke-width="1.26" fill="none" stroke-linecap="round" stroke-linejoin="round"/><path d="M263.8 264.5 L269.7 271.9 L282.9 282.1 L288.0 277.0 L290.9 282.1 L300.0 289.4" stroke="#101010" stroke-width="1.54" fill="none" stroke-linecap="round" stroke-linejoin="round"/><path d="M290.2 283.6 L293.1 295.0" stroke="#101010" stroke-width="1.26" fill="none" stroke-linecap="round" stroke-linejoin="round"/><path d="M259.4 290.0 L258.5 310.2 L264.2 303.5 L270.0 315.0 L275.8 321.7" stroke="#101010" stroke-width="1.54" fill="none" stroke-linecap="round" stroke-linejoin="round"/><path d="M287.2 294.2 C288.3 295.1 291.3 298.1 293.8 299.3 C296.3 300.5 300.8 301.1 302.2 301.5" stroke="#101010" stroke-width="1.40" fill="none" stroke-linecap="round" stroke-linejoin="round"/><path d="M291.2 284.7 C291.5 286.1 292.0 290.8 293.1 293.4 C294.2 295.9 297.0 298.9 297.8 300.0" stroke="#101010" stroke-width="1.26" fill="none" stroke-linecap="round" stroke-linejoin="round"/><path d="M288.3 298.7 L292.1 312.1" stroke="#101010" stroke-width="1.26" fill="none" stroke-linecap="round" stroke-linejoin="round"/><path d="M355.7 297.6 L355.1 311.4" stroke="#101010" stroke-width="1.40" fill="none" stroke-linecap="round" stroke-linejoin="round"/><path d="M356.3 298.8 L363.2 317.6" stroke="#101010" stroke-width="1.40" fill="none" stroke-linecap="round" stroke-linejoin="round"/><path d="M376.0 293.5 L384.5 298.5 L377.0 298.0" stroke="#101010" stroke-width="1.40" fill="none" stroke-linecap="round" stroke-linejoin="round"/><path d="M366.4 297.6 L377.7 312.6" stroke="#101010" stroke-width="1.40" fill="none" stroke-linecap="round" stroke-linejoin="round"/><path d="M376.4 299.0 C376.2 300.2 375.4 302.9 375.5 306.0 C375.6 309.1 376.8 315.7 377.0 317.6" stroke="#101010" stroke-width="1.26" fill="none" stroke-linecap="round" stroke-linejoin="round"/><path d="M378.3 310.1 L404.0 310.7" stroke="#101010" stroke-width="1.54" fill="none" stroke-linecap="round" stroke-linejoin="round"/><path d="M275.8 316.0 L285.4 308.3" stroke="#101010" stroke-width="1.40" fill="none" stroke-linecap="round" stroke-linejoin="round"/><path d="M281.5 316.9 L300.0 314.5 L321.9 311.2 L329.6 322.7" stroke="#101010" stroke-width="1.40" fill="none" stroke-linecap="round" stroke-linejoin="round"/><path d="M319.0 318.0 L320.0 324.0 L323.0 330.0" stroke="#101010" stroke-width="1.26" fill="none" stroke-linecap="round" stroke-linejoin="round"/><path d="M275.8 323.7 C274.5 324.5 270.7 325.5 268.1 328.5 C265.5 331.5 262.6 336.4 260.4 341.9 C258.1 347.3 254.4 355.8 254.6 361.2 C254.8 366.6 260.0 371.1 261.3 374.6 C262.6 378.1 262.1 380.8 262.3 382.0" stroke="#101010" stroke-width="1.68" fill="none" stroke-linecap="round" stroke-linejoin="round"/><path d="M275.8 323.7 C280.3 323.1 296.4 319.5 302.7 319.8 C308.9 320.1 310.7 323.7 313.3 325.6 C315.9 327.5 317.3 330.4 318.1 331.3" stroke="#101010" stroke-width="1.54" fill="none" stroke-linecap="round" stroke-linejoin="round"/><path d="M318.1 331.3 C316.5 331.0 313.1 329.2 308.5 329.4 C303.9 329.6 294.7 330.2 290.2 332.3 C285.7 334.4 284.4 337.7 281.5 341.9 C278.6 346.1 274.5 350.6 272.9 357.3 C271.3 364.0 272.1 377.9 271.9 382.0" stroke="#101010" stroke-width="1.54" fill="none" stroke-linecap="round" stroke-linejoin="round"/><path d="M278.7 351.5 C280.8 349.9 286.2 344.6 291.2 341.9 C296.2 339.2 305.6 336.3 308.5 335.2" stroke="#333" stroke-width="1.40" fill="none" stroke-linecap="round" stroke-linejoin="round"/><path d="M321.0 330.4 L345.0 332.3" stroke="#101010" stroke-width="1.26" fill="none" stroke-linecap="round" stroke-linejoin="round"/><path d="M321.0 325.6 C323.4 325.1 329.1 323.7 335.4 322.7 C341.6 321.7 350.2 320.3 358.5 319.7 C366.8 319.1 377.0 319.7 385.0 318.9 C393.0 318.1 402.8 315.6 406.4 315.0" stroke="#101010" stroke-width="1.54" fill="none" stroke-linecap="round" stroke-linejoin="round"/><path d="M406.4 315.0 C409.4 314.7 420.4 312.6 424.6 313.2 C428.9 313.8 430.2 316.4 431.9 318.7 C433.6 321.0 434.2 325.5 434.7 326.9" stroke="#101010" stroke-width="1.54" fill="none" stroke-linecap="round" stroke-linejoin="round"/><path d="M404.6 312.3 C406.1 311.4 409.8 308.2 413.7 306.8 C417.6 305.4 423.1 305.2 428.3 304.1 C433.5 303.1 440.4 300.6 444.7 300.5 C448.9 300.4 451.7 302.0 453.8 303.2 C455.9 304.4 456.8 307.0 457.4 307.8" stroke="#101010" stroke-width="1.68" fill="none" stroke-linecap="round" stroke-linejoin="round"/><path d="M453.8 303.2 C453.2 305.2 452.5 311.8 450.1 315.0 C447.7 318.2 441.9 320.5 439.2 322.3 C436.5 324.1 434.7 325.4 433.8 326.0" stroke="#101010" stroke-width="1.54" fill="none" stroke-linecap="round" stroke-linejoin="round"/><path d="M458.3 304.1 L470.2 305.0 L481.1 332.3 L472.0 348.7 L468.4 349.6" stroke="#101010" stroke-width="1.54" fill="none" stroke-linecap="round" stroke-linejoin="round"/><path d="M455.6 308.7 C457.4 310.1 463.9 312.8 466.5 316.9 C469.1 321.0 470.8 328.4 471.1 333.3 C471.4 338.2 470.4 342.7 468.4 346.0 C466.4 349.3 462.9 350.9 459.3 353.3 C455.7 355.7 454.4 359.1 446.5 360.6 C438.6 362.1 417.7 362.1 411.9 362.4" stroke="#101010" stroke-width="1.54" fill="none" stroke-linecap="round" stroke-linejoin="round"/><path d="M435.6 325.0 C432.2 328.8 422.2 338.3 415.5 347.8 C408.8 357.3 398.8 376.3 395.5 382.0" stroke="#101010" stroke-width="1.54" fill="none" stroke-linecap="round" stroke-linejoin="round"/><path d="M410 368.8m-2.6 0a2.6 2.6 0 1 0 5.2 0a2.6 2.6 0 1 0 -5.2 0" stroke="#101010" stroke-width="1.26" fill="none" stroke-linecap="round" stroke-linejoin="round"/><path d="M459.0 354.4 L459.6 369.0 L467.3 382.0" stroke="#101010" stroke-width="1.40" fill="none" stroke-linecap="round" stroke-linejoin="round"/></svg>
</body></html>
